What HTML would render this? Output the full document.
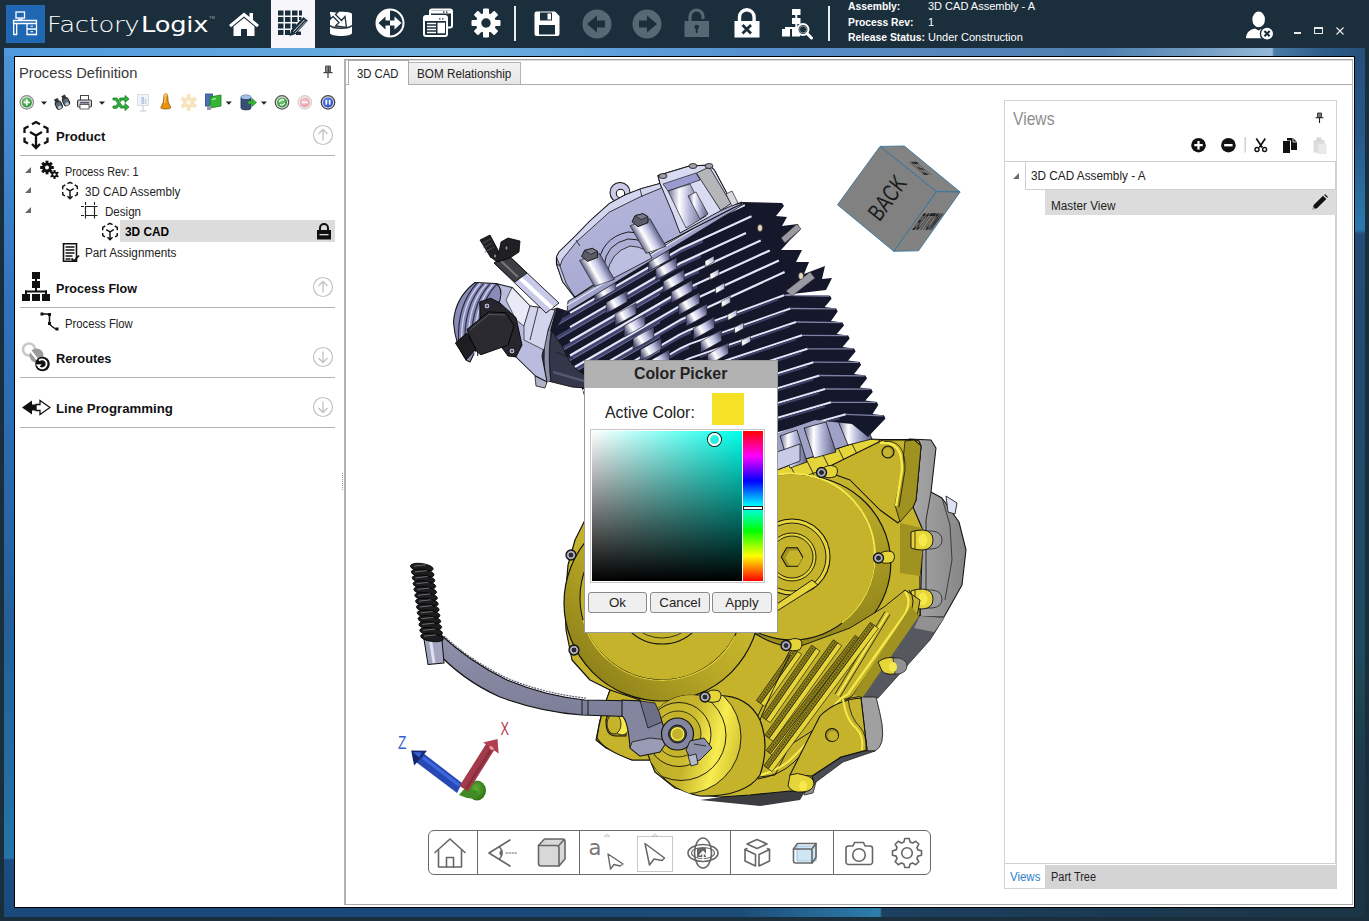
<!DOCTYPE html>
<html lang="en">
<head>
<meta charset="utf-8">
<title>FactoryLogix - Process Definition</title>
<style>
html,body{margin:0;padding:0;}
body{width:1369px;height:921px;position:relative;overflow:hidden;background:#1b2e3c;font-family:"Liberation Sans",sans-serif;font-size:12px;color:#222;}
.abs{position:absolute;}
.t{position:absolute;white-space:nowrap;line-height:1;transform-origin:0 0;}
#frame{left:4px;top:48px;width:1361px;height:869px;background:linear-gradient(90deg,#4f9ade 0px,#6eb0de 452px,#5fa2dc 596px,#5590cf 746px,#5788bd 908px,#4d7fb0 1096px,#6b97bd 1176px,#93b9d6 1268px,#4a7ba6 1270px,#2e5c8a 1320px,#24507a 1361px);}
#frameL{left:4px;top:56px;width:10px;height:861px;background:linear-gradient(180deg,#4c95d8 0px,#2f72bc 250px,#2a68ac 420px,#23609a 570px,#2474a8 800px,#2476aa 802px,#1b4d80 804px,#1a4a7c 861px);}
#frameB{left:4px;top:907px;width:1361px;height:10px;background:linear-gradient(90deg,#1a4a7c 0px,#1a4878 500px,#1c4c78 736px,#2c7aa8 866px,#2e7eac 876px,#1c4060 878px,#1b3a52 1100px,#1b3445 1361px);}
#frameR{left:1355px;top:56px;width:10px;height:861px;background:linear-gradient(180deg,#25507c 0px,#27588a 80px,#2b78ac 168px,#2b78ac 174px,#234c78 178px,#214a6c 400px,#1f4a5e 600px,#1e4452 640px,#1c3a4c 700px,#1b3445 861px);}
#win{left:14px;top:56px;width:1339px;height:850px;background:#fff;border:1px solid #000;}
.b{font-weight:bold;}
.tree{font-size:12px;color:#222;}
.hdr{font-size:14px;font-weight:bold;color:#111;}
.sep{position:absolute;height:1px;background:#b4b4b4;left:20px;width:315px;}
.cpb{background:#efefef;border:1px solid #8a8a8a;border-radius:3px;box-sizing:border-box;font-size:13.300px;text-align:center;line-height:19px;color:#222;}
</style>
</head>
<body>
<!-- window frame -->
<div id="frame" class="abs"></div>
<div id="frameL" class="abs"></div>
<div id="frameR" class="abs"></div>
<div id="frameB" class="abs"></div>
<div id="win" class="abs"></div>

<!-- TOPBAR -->
<div id="topbar" class="abs" style="left:0;top:0;width:1369px;height:48px;background:#1b2e3c;"></div>
<!--TOPBAR-CONTENT-->
<div class="abs" style="left:6px;top:5px;width:39px;height:38px;background:#1f66b3;box-shadow:inset 0 0 3px #2a6cb0;"></div>
<svg class="abs" style="left:6px;top:5px" width="39" height="38" viewBox="0 0 39 38" fill="none" stroke="#fff" stroke-width="1.3">
<rect x="10" y="7" width="8.5" height="6"/><path d="M13 13v2h3v-2"/>
<path d="M7.5 15.5h23v3h-23zM7.700 18.500v11h3v-11M21 18.500v11h9.500v-11M21 24h9.500"/>
<path d="M24.500 21.200h2.500M24.500 26.700h2.500" stroke-width="1"/>
</svg>
<div class="t" style="left:46.500px;top:13.500px;font-family:'DejaVu Sans Light','DejaVu Sans',sans-serif;font-weight:200;font-size:22px;color:#fff;letter-spacing:-0.3px;transform:scaleX(1.18);" id="fl1">Factory</div>
<div class="t" style="left:140.600px;top:13.500px;font-family:'DejaVu Sans',sans-serif;font-weight:400;font-size:22px;color:#fff;letter-spacing:-0.2px;transform:scaleX(1.17);" id="fl2">Logix</div>
<div class="t" style="left:209px;top:16px;font-size:4px;color:#9aa;">TM</div>
<!-- selected tab -->
<div class="abs" style="left:271px;top:0;width:44px;height:48px;background:#f7f7fb;"></div>
<!-- home -->
<svg class="abs" style="left:228px;top:10px" width="32" height="28" viewBox="0 0 32 28"><path d="M16 2.500L1 15l2 2.300L16 6.500l13 10.800 2-2.300L25 10V3h-3.500v4z" fill="#fff"/><path d="M5.500 16.500L16 8l10.500 8.500V26h-7.500v-7h-6v7h-7.500z" fill="#fff"/></svg>
<!-- grid pencil -->
<svg class="abs" style="left:277px;top:9px" width="32" height="28" viewBox="0 0 32 28"><g fill="#1b2e3c"><rect x="1" y="1.500" width="5.500" height="5"/><rect x="8" y="1.500" width="5.500" height="5"/><rect x="15" y="1.500" width="5.500" height="5"/><rect x="22" y="1.500" width="3" height="5"/><rect x="1" y="8" width="5.500" height="5"/><rect x="8" y="8" width="5.500" height="5"/><rect x="15" y="8" width="5.500" height="5"/><rect x="22" y="8" width="2.500" height="3"/><rect x="1" y="14.500" width="5.500" height="5"/><rect x="8" y="14.500" width="5.500" height="5"/><rect x="15" y="14.500" width="4" height="5"/><rect x="1" y="21" width="5.500" height="5"/><rect x="8" y="21" width="5" height="5"/><rect x="19" y="22.500" width="5" height="3.500"/></g><path d="M12.500 27l1.700-6L26.500 8l4.300 3.800L18.700 25z" fill="#1b2e3c"/><path d="M16.500 22.500L27.500 10.800" stroke="#f7f7fb" stroke-width="0.900"/><path d="M18 24L29 12.300" stroke="#f7f7fb" stroke-width="0.700"/></svg>
<!-- database -->
<svg class="abs" style="left:327px;top:8px" width="28" height="30" viewBox="0 0 28 30"><path d="M3 6c0-3 22-3 22 0v19c0 4-22 4-22 0z" fill="#fff"/><path d="M3 17.500c3 3.500 19 3.500 22 0" stroke="#1b2e3c" stroke-width="1.500" fill="none"/><path d="M2 3l9 1-2.500 2.500 6 6 3.500-4 1.500 11-11-1.500 3.500-3.500-6-6L3.500 11z" fill="#fff" stroke="#1b2e3c" stroke-width="1.300"/></svg>
<!-- circle arrows -->
<svg class="abs" style="left:374px;top:7px" width="32" height="32" viewBox="0 0 32 32"><circle cx="16" cy="16" r="13.500" fill="none" stroke="#fff" stroke-width="2"/><path d="M16 2.500A13.500 13.500 0 0 0 16 29.500z" fill="#fff"/><path d="M4.500 16l7-6.500v4h4.500v5h-4.500v4z" fill="#1b2e3c"/><path d="M27.500 16l-7-6.500v4H16v5h4.500v4z" fill="#fff"/></svg>
<!-- windows -->
<svg class="abs" style="left:422px;top:8px" width="32" height="30" viewBox="0 0 32 30"><rect x="8" y="1.500" width="22" height="18" rx="2" fill="#1b2e3c" stroke="#fff" stroke-width="2"/><rect x="2" y="8" width="23" height="20" rx="2" fill="#1b2e3c" stroke="#fff" stroke-width="2"/><path d="M2 9h23v4H2z" fill="#fff"/><path d="M5 15.500h9M5 18.500h9M5 21.500h9M5 24.500h9" stroke="#fff" stroke-width="1.600"/><rect x="15.500" y="14.700" width="7.500" height="10.600" fill="#fff"/><path d="M9 4h20" stroke="#fff" stroke-width="3"/><path d="M21 4.200h1.500M24 4.200h1.500" stroke="#1b2e3c" stroke-width="1.200"/><path d="M17 10.800h1.500M20 10.800h1.500" stroke="#1b2e3c" stroke-width="1.200"/></svg>
<!-- gear -->
<svg class="abs" style="left:471px;top:8px" width="30" height="30" viewBox="-15 -15 30 30"><g fill="#fff"><circle r="10"/><g id="gt"><rect x="-3" y="-14.500" width="6" height="7" rx="1"/></g><use href="#gt" transform="rotate(45)"/><use href="#gt" transform="rotate(90)"/><use href="#gt" transform="rotate(135)"/><use href="#gt" transform="rotate(180)"/><use href="#gt" transform="rotate(225)"/><use href="#gt" transform="rotate(270)"/><use href="#gt" transform="rotate(315)"/></g><circle r="4.700" fill="#1b2e3c"/></svg>
<div class="abs" style="left:514px;top:6px;width:2px;height:35px;background:#e8eaec;"></div>
<!-- save -->
<svg class="abs" style="left:534px;top:11px" width="26" height="26" viewBox="0 0 26 26"><path d="M2.500 0.500h18.500l4.500 4.500v18a2 2 0 0 1-2 2h-21a2 2 0 0 1-2-2v-20.500a2 2 0 0 1 2-2z" fill="#fff"/><rect x="5" y="14" width="16" height="9.500" fill="#1b2e3c"/><rect x="6" y="1.500" width="12" height="8" fill="#1b2e3c"/><rect x="13.500" y="2.500" width="3.500" height="6" fill="#fff"/></svg>
<!-- back/forward -->
<svg class="abs" style="left:582px;top:9px" width="30" height="30" viewBox="0 0 30 30"><circle cx="15" cy="15" r="14.500" fill="#566874"/><path d="M5 15l10-8.500v5h8v7h-8v5z" fill="#1b2e3c"/></svg>
<svg class="abs" style="left:632px;top:9px" width="30" height="30" viewBox="0 0 30 30"><circle cx="15" cy="15" r="14.500" fill="#566874"/><path d="M25 15l-10-8.500v5H7v7h8v5z" fill="#1b2e3c"/></svg>
<!-- unlock -->
<svg class="abs" style="left:684px;top:8px" width="26" height="30" viewBox="0 0 26 30"><path d="M6 13V8.500a6.500 6.500 0 0 1 13 0V11" fill="none" stroke="#566874" stroke-width="3.200"/><rect x="0.500" y="13" width="24.500" height="16" fill="#566874"/><circle cx="12.700" cy="19" r="2.300" fill="#1b2e3c"/><rect x="11.800" y="19" width="1.800" height="6" fill="#1b2e3c"/></svg>
<!-- lock x -->
<svg class="abs" style="left:734px;top:8px" width="26" height="30" viewBox="0 0 26 30"><path d="M5.500 14V9a7.300 7.300 0 0 1 14.600 0v5" fill="none" stroke="#fff" stroke-width="3.400"/><rect x="0.500" y="13" width="25" height="16.500" fill="#fff"/><path d="M8.500 17l8.500 8.500M17 17l-8.500 8.500" stroke="#1b2e3c" stroke-width="2.800"/></svg>
<!-- hierarchy search -->
<svg class="abs" style="left:781px;top:8px" width="32" height="32" viewBox="0 0 32 32"><g fill="#fff"><rect x="11" y="1" width="8.500" height="6"/><rect x="11" y="10" width="8.500" height="6"/><rect x="14.300" y="6" width="2" height="14"/><rect x="4" y="19" width="17" height="2"/><rect x="1" y="21" width="8" height="7.500"/><rect x="11" y="21" width="8" height="7.500"/><rect x="4" y="19" width="2" height="4"/></g><circle cx="22" cy="21.500" r="5.500" fill="#1b2e3c" stroke="#fff" stroke-width="2"/><circle cx="22" cy="21.500" r="3.600" fill="none" stroke="#8a97a0" stroke-width="1"/><path d="M26 25.500l4.500 4.500" stroke="#fff" stroke-width="3" stroke-linecap="round"/></svg>
<div class="abs" style="left:828px;top:6px;width:2px;height:35px;background:#e8eaec;"></div>
<!-- info -->
<div class="t b" style="left:848px;top:1px;font-size:11px;color:#fff;transform:scaleX(0.94);" id="i1">Assembly:</div>
<div class="t" style="left:928px;top:1px;font-size:11px;color:#fff;" id="i2">3D CAD Assembly - A</div>
<div class="t b" style="left:848px;top:16.500px;font-size:11px;color:#fff;transform:scaleX(0.94);" id="i3">Process Rev:</div>
<div class="t" style="left:928px;top:16.500px;font-size:11px;color:#fff;" id="i4">1</div>
<div class="t b" style="left:848px;top:31.500px;font-size:11px;color:#fff;transform:scaleX(0.94);" id="i5">Release Status:</div>
<div class="t" style="left:928px;top:31.500px;font-size:11px;color:#fff;" id="i6">Under Construction</div>
<!-- user icon -->
<svg class="abs" style="left:1244.500px;top:9.500px" width="31.500" height="31.500" viewBox="0 0 30 30"><ellipse cx="13" cy="9" rx="6" ry="7.500" fill="#fff"/><path d="M1 27c0-6 4-8.500 8.500-9.500l3.500 2 3.500-2c2 .4 4 1.200 5.500 2.500v7z" fill="#fff"/><circle cx="21" cy="22.500" r="6.300" fill="#fff" stroke="#1b2e3c" stroke-width="1.300"/><path d="M18.500 20l5 5M23.500 20l-5 5" stroke="#1b2e3c" stroke-width="2"/></svg>
<div class="abs" style="left:1294px;top:32px;width:7px;height:2px;background:#e8e8e8;"></div>
<div class="abs" style="left:1314px;top:27px;width:7px;height:4px;border:1px solid #e8e8e8;border-top-width:2px;"></div>
<svg class="abs" style="left:1335px;top:25.500px" width="10" height="10" viewBox="0 0 10 10"><path d="M1.500 1.500l7 7M8.500 1.500l-7 7" stroke="#e8e8e8" stroke-width="1.200"/></svg>
<!--/TOPBAR-CONTENT-->

<!--LEFT-PANEL-->
<div class="t" style="left:19px;top:65px;font-size:15.500px;color:#3a3a3a;transform:scaleX(0.948);" id="pd">Process Definition</div>
<svg class="abs" style="left:322px;top:65px" width="12" height="14" viewBox="0 0 12 14"><path d="M3.500 1h5v6.500h-5z" fill="#888" stroke="#555" stroke-width="1"/><path d="M6.500 1.500v6" stroke="#444" stroke-width="1.500"/><path d="M1.500 7.700h9M6 8v5" stroke="#444" stroke-width="1.200"/></svg>
<!-- small toolbar -->
<svg class="abs" style="left:14px;top:92px" width="330" height="22" viewBox="0 0 330 22">
<defs>
<radialGradient id="gG" cx="0.4" cy="0.35" r="0.7"><stop offset="0" stop-color="#7fd27f"/><stop offset="1" stop-color="#1f8a2c"/></radialGradient>
<radialGradient id="gR" cx="0.4" cy="0.35" r="0.7"><stop offset="0" stop-color="#f7c4c8"/><stop offset="1" stop-color="#ee9aa3"/></radialGradient>
<radialGradient id="gB" cx="0.4" cy="0.35" r="0.7"><stop offset="0" stop-color="#6b8ff0"/><stop offset="1" stop-color="#2447c8"/></radialGradient>
</defs>
<g>
<circle cx="12.800" cy="10.400" r="6.700" fill="#e8e8e8" stroke="#8a8a8a" stroke-width="1.200"/><circle cx="12.800" cy="10.400" r="5" fill="url(#gG)"/><path d="M12.800 7.300v6.200M9.700 10.400h6.200" stroke="#fff" stroke-width="1.800"/>
<path d="M27 9.500h6l-3 3.200z" fill="#222"/>
<!-- binoculars -->
<g transform="translate(48 10.500) rotate(-25)"><rect x="-7" y="-3" width="6" height="8" rx="2.500" fill="#5a6a78" stroke="#222" stroke-width="1"/><rect x="1" y="-3" width="6" height="8" rx="2.500" fill="#5a6a78" stroke="#222" stroke-width="1"/><rect x="-6" y="-6" width="4" height="4" fill="#333"/><rect x="2" y="-6" width="4" height="4" fill="#333"/><ellipse cx="-4" cy="3.500" rx="2" ry="1.500" fill="#bcd"/><ellipse cx="4" cy="3.500" rx="2" ry="1.500" fill="#bcd"/></g>
<!-- printer -->
<rect x="66.500" y="3.500" width="8" height="5" fill="#fff" stroke="#444" stroke-width="1"/><rect x="63.500" y="8" width="14" height="7" rx="1" fill="#c9ccd2" stroke="#333" stroke-width="1"/><rect x="66" y="12.500" width="9" height="4.500" fill="#fff" stroke="#444" stroke-width="0.800"/><rect x="66" y="10" width="9" height="1.500" fill="#556"/>
<path d="M85 9.500h6l-3 3.200z" fill="#222"/>
<!-- green shuffle -->
<path d="M99 6h4l5 8h3v-2.500l4 3.500-4 3.500V16h-4.500l-5-8H99zM99 14h3l1.200-1.800 1.300 2-1.500 2H99zM106 6h5V3.500l4 3.500-4 3.500V8h-3.500l-1 1.600-1.300-2z" fill="#2fb43a" stroke="#137a1c" stroke-width="0.800"/>
<!-- presentation (faded) -->
<g opacity="0.45"><rect x="123.500" y="2.500" width="11" height="11" fill="#dfe8f4" stroke="#9ab" stroke-width="0.800"/><rect x="127.500" y="5" width="2.500" height="7" fill="#6a8ac0"/><rect x="130.500" y="7" width="2" height="5" fill="#9ab"/><path d="M129 13.500v5M126 19h6" stroke="#889" stroke-width="1"/></g>
<!-- pawn/bell -->
<path d="M150 3.500a1.800 1.800 0 0 1 3.600 0l.6 6.500 2.600 5.500c0 2-10 2-10 0l2.600-5.500z" fill="#e8940f" stroke="#8a4a00" stroke-width="0.700"/><path d="M151.200 4l-.4 7" stroke="#ffd37a" stroke-width="1.200"/><circle cx="151.800" cy="3" r="1.600" fill="#f6c26a"/>
<!-- faded gear -->
<g transform="translate(174.700 10.500)" opacity="0.8"><circle r="5.500" fill="#f7ddb0"/><g fill="#f7ddb0"><rect x="-2" y="-8.500" width="4" height="17" rx="1"/><rect x="-2" y="-8.500" width="4" height="17" rx="1" transform="rotate(60)"/><rect x="-2" y="-8.500" width="4" height="17" rx="1" transform="rotate(120)"/></g><circle r="2.300" fill="#fff6e4"/></g>
<!-- monitor green -->
<rect x="191.500" y="2" width="7" height="12" fill="#4a6fb5" stroke="#2b4a86" stroke-width="0.800"/><path d="M194 15l2-3 3 2z" fill="#777"/><path d="M196 5l11-2v11l-11 2z" fill="#35b535" stroke="#1c7a22" stroke-width="0.800"/><path d="M198 7.500l4-1" stroke="#c8f5c8" stroke-width="1.200"/><rect x="193" y="14" width="4" height="4" fill="#99a"/>
<path d="M211.800 9.500h6l-3 3.200z" fill="#222"/>
<!-- db arrow -->
<path d="M227 5c0-2.500 10-2.500 10 0v11c0 2.500-10 2.500-10 0z" fill="#3a4f78" stroke="#1f2d4a" stroke-width="0.800"/><ellipse cx="232" cy="5" rx="5" ry="2" fill="#9fc0e8"/><path d="M234 9h4V6.500l4.500 4-4.500 4V12h-4z" fill="#35b535" stroke="#1c7a22" stroke-width="0.600"/>
<path d="M246.900 9.500h6l-3 3.200z" fill="#222"/>
<!-- green refresh circle -->
<circle cx="268" cy="10.400" r="6.700" fill="#e4e4e4" stroke="#555" stroke-width="1.300"/><circle cx="268" cy="10.400" r="5" fill="url(#gG)"/><path d="M265.500 10a2.600 2.600 0 0 1 4.500-1.500M270.500 10.800a2.600 2.600 0 0 1-4.500 1.500" stroke="#fff" stroke-width="1.300" fill="none"/>
<!-- red minus faded -->
<circle cx="290.800" cy="10.400" r="6.700" fill="#f0f0f0" stroke="#d0d0d0" stroke-width="1.200"/><circle cx="290.800" cy="10.400" r="5" fill="url(#gR)"/><path d="M287.800 10.400h6" stroke="#fff" stroke-width="1.800"/>
<!-- blue pause -->
<circle cx="314" cy="10.400" r="6.700" fill="#d8d8e0" stroke="#444" stroke-width="1.300"/><circle cx="314" cy="10.400" r="5" fill="url(#gB)"/><path d="M312.300 8v4.800M315.700 8v4.800" stroke="#fff" stroke-width="1.500"/>
</g></svg>
<!-- symbols -->
<svg width="0" height="0" style="position:absolute"><defs>
<symbol id="cube" viewBox="0 0 28 30"><g fill="none" stroke="#111" stroke-width="2.300" stroke-linejoin="miter"><path d="M10 4.300L14 2l4 2.300M21.500 6.300l4 2.200v4.500M6.500 6.300l-4 2.200v4.500M25.500 17.500v4l-3.500 2M2.500 17.500v4l3.500 2M14 15.500V27.500M14 15.500L8 12M14 15.500L20 12M10 24l4 4 4-4"/></g></symbol>
<symbol id="circUp" viewBox="0 0 22 22"><circle cx="11" cy="11" r="9.500" fill="#fff" stroke="#c2c2c2" stroke-width="1.200"/><path d="M11 16.500v-11M6.500 10L11 5.500l4.500 4.500" stroke="#c2c2c2" stroke-width="1.300" fill="none"/></symbol>
<symbol id="circDn" viewBox="0 0 22 22"><circle cx="11" cy="11" r="9.500" fill="#fff" stroke="#c2c2c2" stroke-width="1.200"/><path d="M11 5.500v11M6.500 12L11 16.500l4.500-4.500" stroke="#c2c2c2" stroke-width="1.300" fill="none"/></symbol>
<symbol id="exp" viewBox="0 0 6 6"><path d="M6 0V6H0z" fill="#6a6a6a"/></symbol>
</defs></svg>
<svg class="abs" style="left:21.500px;top:120px" width="28" height="30"><use href="#cube"/></svg>
<div class="t hdr" style="left:56px;top:129.500px;font-size:13.500px;transform:scaleX(0.967);" id="h1">Product</div>
<svg class="abs" style="left:312px;top:124px" width="22" height="22"><use href="#circUp"/></svg>
<div class="sep" style="top:155px;"></div>
<!-- tree -->
<svg class="abs" style="left:24.500px;top:167px" width="6" height="6"><use href="#exp"/></svg>
<svg class="abs" style="left:24.500px;top:187px" width="6" height="6"><use href="#exp"/></svg>
<svg class="abs" style="left:24.500px;top:207px" width="6" height="6"><use href="#exp"/></svg>
<svg class="abs" style="left:40px;top:160px" width="20" height="20" viewBox="0 0 20 20"><g transform="translate(7 7.500)" fill="#111"><circle r="4.800"/><g id="g6"><rect x="-1.500" y="-6.800" width="3" height="13.600"/></g><use href="#g6" transform="rotate(45)"/><use href="#g6" transform="rotate(90)"/><use href="#g6" transform="rotate(135)"/><circle r="2" fill="#fff"/></g><g transform="translate(14.500 14.500)" fill="#111"><circle r="3"/><rect x="-1" y="-4.500" width="2" height="9"/><rect x="-1" y="-4.500" width="2" height="9" transform="rotate(60)"/><rect x="-1" y="-4.500" width="2" height="9" transform="rotate(120)"/><circle r="1.200" fill="#fff"/></g></svg>
<div class="t tree" style="left:65px;top:165.500px;transform:scaleX(0.904);" id="t1">Process Rev: 1</div>
<svg class="abs" style="left:61px;top:180.500px" width="18" height="19"><use href="#cube"/></svg>
<div class="t tree" style="left:85px;top:186px;transform:scaleX(0.966);" id="t2">3D CAD Assembly</div>
<svg class="abs" style="left:80px;top:200.500px" width="20" height="20" viewBox="0 0 20 20"><g stroke="#222" stroke-width="1.100" fill="none"><path d="M5.500 1v18M14.500 1v18M1 5.500h18M1 14.500h18" stroke-dasharray="3 1.500"/><path d="M5.500 5.500h9v9h-9z"/></g></svg>
<div class="t tree" style="left:105px;top:206px;transform:scaleX(0.965);" id="t3">Design</div>
<div class="abs" style="left:120px;top:220px;width:215px;height:22px;background:#dcdcdc;"></div>
<svg class="abs" style="left:101px;top:221.500px" width="18" height="19"><use href="#cube"/></svg>
<div class="t tree b" style="left:124.500px;top:225.500px;font-size:12.500px;color:#000;transform:scaleX(0.946);" id="t4">3D CAD</div>
<svg class="abs" style="left:316px;top:222px" width="16" height="18" viewBox="0 0 16 18"><path d="M4 8.500V6a4 4 0 0 1 8 0v2.500" fill="none" stroke="#111" stroke-width="2"/><rect x="1" y="8" width="14" height="9.500" fill="#111"/><rect x="3.500" y="12" width="9" height="1.300" fill="#dcdcdc"/></svg>
<svg class="abs" style="left:62px;top:243px" width="18" height="20" viewBox="0 0 18 20"><path d="M1.500 0.800h13v17.500h-13z" fill="#fff" stroke="#111" stroke-width="1.600"/><path d="M3.500 4h9M3.500 7h9M3.500 10h9M3.500 13h7" stroke="#111" stroke-width="1.500"/><path d="M3.500 16h5" stroke="#111" stroke-width="1.500"/><path d="M9.500 15.500l2.500 2.500 5-5.500" stroke="#111" stroke-width="1.800" fill="none"/></svg>
<div class="t tree" style="left:85px;top:247px;transform:scaleX(0.979);" id="t5">Part Assignments</div>
<!-- Process Flow header -->
<svg class="abs" style="left:22px;top:272px" width="28" height="30" viewBox="0 0 28 30"><g fill="#111"><rect x="10" y="0" width="8" height="7"/><rect x="10" y="9" width="8" height="7"/><rect x="13" y="6" width="2" height="14"/><rect x="3" y="18.500" width="22" height="2"/><rect x="3" y="18.500" width="2" height="4"/><rect x="23" y="18.500" width="2" height="4"/><rect x="0" y="22" width="8" height="7"/><rect x="10" y="22" width="8" height="7"/><rect x="20" y="22" width="8" height="7"/></g></svg>
<div class="t hdr" style="left:56px;top:281.500px;font-size:13.500px;transform:scaleX(0.931);" id="h2">Process Flow</div>
<svg class="abs" style="left:312px;top:276px" width="22" height="22"><use href="#circUp"/></svg>
<div class="sep" style="top:307px;"></div>
<svg class="abs" style="left:40px;top:312px" width="20" height="20" viewBox="0 0 20 20"><path d="M2 2h5c2 0 2.500 1 2.500 2.500v6c0 2 1 3 2.500 4l4.500 3" fill="none" stroke="#111" stroke-width="1.500"/><g fill="#111"><rect x="0.500" y="0.500" width="3" height="3"/><rect x="8" y="1" width="3" height="3"/><rect x="8" y="10" width="3" height="3"/><rect x="15.500" y="15.500" width="3" height="3"/></g></svg>
<div class="t tree" style="left:65px;top:317.500px;transform:scaleX(0.94);" id="t6">Process Flow</div>
<!-- Reroutes -->
<svg class="abs" style="left:21px;top:342px" width="30" height="30" viewBox="0 0 30 30"><circle cx="8" cy="7.500" r="6" fill="none" stroke="#c8c8c8" stroke-width="2.500"/><circle cx="15.500" cy="13.500" r="7" fill="#9a9a9a"/><path d="M8 7l11 14" stroke="#fff" stroke-width="2.200"/><circle cx="21.500" cy="22" r="7.300" fill="#111"/><path d="M18 18.500a4.500 4.500 0 1 1-.5 6" stroke="#fff" stroke-width="1.800" fill="none"/><path d="M14.800 22.500l3 3.500 2.800-3.700z" fill="#fff"/></svg>
<div class="t hdr" style="left:56px;top:351.500px;font-size:13.500px;transform:scaleX(0.947);" id="h3">Reroutes</div>
<svg class="abs" style="left:312px;top:346px" width="22" height="22"><use href="#circDn"/></svg>
<div class="sep" style="top:377px;"></div>
<!-- Line Programming -->
<svg class="abs" style="left:21px;top:399px" width="30" height="17" viewBox="0 0 30 17"><path d="M1 8.500L11 1.500V5.500H15V11.500H11V15.500z" fill="#111"/><path d="M29 8.500L19 1.500V5.500H15V11.500H19V15.500z" fill="#fff" stroke="#111" stroke-width="1.300"/></svg>
<div class="t hdr" style="left:56px;top:401.500px;font-size:13.500px;transform:scaleX(0.98);" id="h4">Line Programming</div>
<svg class="abs" style="left:312px;top:396px" width="22" height="22"><use href="#circDn"/></svg>
<div class="sep" style="top:427px;"></div>
<!-- splitter dots -->
<div class="abs" style="left:342px;top:473px;width:1px;height:17px;background:repeating-linear-gradient(180deg,#999 0 1px,#fff 1px 2px);"></div>
<!--/LEFT-PANEL-->

<!--MAIN-PANEL-->
<!-- main tab control -->
<div class="abs" style="left:344px;top:59px;width:1009px;height:846px;border-left:2px solid #b2b2b2;border-top:1px solid #a6a6a6;border-right:1px solid #b8b8b8;border-bottom:1px solid #a6a6a6;box-sizing:border-box;"></div>
<div class="abs" style="left:346px;top:60px;width:1006px;height:1px;background:#dcdcdc;"></div>
<div class="abs" style="left:349px;top:84px;width:1003px;height:1px;background:#ababab;"></div>
<div class="abs" style="left:346px;top:61px;width:2px;height:24px;border-right:1px solid #b0b0b0;border-bottom:1px solid #b0b0b0;box-sizing:content-box;height:23px;"></div>
<div class="abs" style="left:408px;top:62px;width:113px;height:22px;background:linear-gradient(180deg,#f2f2f2,#e6e6e6);border:1px solid #b4b4b4;border-bottom:none;box-sizing:border-box;"></div>
<div class="abs" style="left:348px;top:60px;width:61px;height:25px;background:#fff;border:1px solid #ababab;border-bottom:none;box-sizing:border-box;"></div>
<div class="t" style="left:357px;top:67.500px;font-size:12px;color:#222;transform:scaleX(0.941);" id="tab1">3D CAD</div>
<div class="t" style="left:417px;top:67.500px;font-size:12px;color:#222;transform:scaleX(0.976);" id="tab2">BOM Relationship</div>
<!--/MAIN-PANEL-->

<!--ENGINE-->
<svg class="abs" style="left:400px;top:160px" width="580" height="660" viewBox="400 160 580 660" stroke-linejoin="round">
<defs>
<linearGradient id="cylG" x1="0" y1="0" x2="1" y2="0"><stop offset="0" stop-color="#6d6f98"/><stop offset="0.3" stop-color="#ffffff"/><stop offset="0.55" stop-color="#b9bbdc"/><stop offset="1" stop-color="#5d5f86"/></linearGradient>
<linearGradient id="colG" gradientUnits="userSpaceOnUse" x1="0" y1="0" x2="22" y2="-12"><stop offset="0" stop-color="#4e5078"/><stop offset="0.35" stop-color="#ffffff"/><stop offset="0.6" stop-color="#c4c6e4"/><stop offset="1" stop-color="#55577e"/></linearGradient>
<linearGradient id="magG" x1="0" y1="1" x2="1" y2="0"><stop offset="0" stop-color="#7d7114"/><stop offset="0.45" stop-color="#b8a826"/><stop offset="1" stop-color="#e0cf36"/></linearGradient>
<linearGradient id="cluG" x1="0" y1="0" x2="1" y2="1"><stop offset="0" stop-color="#d8c833"/><stop offset="0.6" stop-color="#a89a22"/><stop offset="1" stop-color="#857a18"/></linearGradient>
<linearGradient id="bossG" x1="0" y1="0" x2="1" y2="1"><stop offset="0" stop-color="#c4b32b"/><stop offset="0.5" stop-color="#f3e646"/><stop offset="1" stop-color="#c0b02a"/></linearGradient>
<linearGradient id="bossH" gradientUnits="userSpaceOnUse" x1="640" y1="720" x2="768" y2="750"><stop offset="0" stop-color="#b8a827"/><stop offset="0.4" stop-color="#c6b52c"/><stop offset="0.62" stop-color="#f7ec50"/><stop offset="0.78" stop-color="#d8c834"/><stop offset="1" stop-color="#a89a22"/></linearGradient>
<linearGradient id="bossH2" gradientUnits="userSpaceOnUse" x1="640" y1="720" x2="768" y2="750"><stop offset="0" stop-color="#c4b32b"/><stop offset="0.4" stop-color="#cdbc2f"/><stop offset="0.56" stop-color="#f7ec50"/><stop offset="0.7" stop-color="#d8c834"/><stop offset="1" stop-color="#b8a827"/></linearGradient>
<linearGradient id="armG" x1="0" y1="0" x2="0" y2="1"><stop offset="0" stop-color="#8f91ab"/><stop offset="1" stop-color="#7c7e97"/></linearGradient>
<linearGradient id="vcG" x1="0" y1="0" x2="0.4" y2="1"><stop offset="0" stop-color="#cfd1ee"/><stop offset="0.35" stop-color="#b2b4da"/><stop offset="1" stop-color="#a6a8d0"/></linearGradient>
<linearGradient id="grayG" x1="0" y1="0" x2="1" y2="0"><stop offset="0" stop-color="#a8a8a8"/><stop offset="1" stop-color="#858585"/></linearGradient>
<clipPath id="finClip"><polygon points=""/></clipPath>
</defs>
<polygon points="909.0,439.0 931.0,440.0 936.0,448.0 931.0,492.0 942.0,498.0 959.0,522.0 966.0,550.0 962.0,585.0 944.0,617.0 920.0,617.0 922.0,555.0 913.0,507.0 909.0,470.0" fill="url(#grayG)" stroke="#111" stroke-width="1.04" />
<polyline points="931.0,492.0 926.0,520.0 926.0,600.0" fill="none" stroke="#222" stroke-width="0.91" />
<polyline points="942.0,498.0 950.0,525.0 952.0,560.0 945.0,600.0" fill="none" stroke="#333" stroke-width="0.91" />
<polygon points="946.0,496.0 957.0,503.0 955.0,514.0 948.0,512.0" fill="#dfe1f5" stroke="#222" stroke-width="0.91" />
<polygon points="918.0,616.0 944.0,618.0 930.0,640.0 878.0,698.0 862.0,697.0" fill="#56585f" stroke="#222" stroke-width="0.78" />
<polygon points="920.0,616.0 944.0,618.0 934.0,632.0 914.0,628.0" fill="#919191" stroke="none" stroke-width="0" />
<path d="M860,697 L876,697 Q880,712 882,724 Q885,746 875,751 L864,751 Z" fill="#a0a0a0" stroke="#222" stroke-width="0.91" />
<polygon points="864.0,751.0 875.0,751.0 843.0,762.0 816.0,782.0 806.0,780.0 838.0,758.0" fill="#4b4d55" stroke="#222" stroke-width="0.78" />
<polygon points="806.0,787.0 816.0,782.0 813.0,793.0 804.0,795.0" fill="#919191" stroke="#222" stroke-width="0.78" />
<polygon points="750.0,793.0 806.0,790.0 800.0,800.0 760.0,806.0 700.0,800.0" fill="#3c3d40" stroke="none" stroke-width="0" />
<polygon points="777.0,470.0 800.0,461.0 821.0,454.0 845.0,446.0 867.0,439.0 883.0,439.5 914.0,439.5 919.0,441.0 921.0,446.0 916.0,500.0 913.0,507.0 922.0,528.0 922.0,555.0 920.0,576.0 920.0,615.0 917.0,617.0 862.0,696.0 861.0,698.0 865.0,733.0 867.0,750.0 841.0,757.0 812.0,776.0 814.0,784.0 805.0,792.0 790.0,791.0 770.0,793.0 750.0,795.0 720.0,797.0 700.0,795.0 675.0,788.0 655.0,772.0 650.0,760.0 632.0,760.0 606.0,748.0 596.0,740.0 600.0,720.0 610.0,690.0 590.0,680.0 572.0,660.0 566.0,630.0 565.0,600.0 568.0,565.0 575.0,540.0 585.0,520.0 585.0,470.0" fill="#c4b32b" stroke="#111" stroke-width="1.17" />
<polygon points="777.0,470.0 800.0,461.0 821.0,454.0 845.0,446.0 867.0,439.0 880.0,440.0 872.0,452.0 850.0,458.0 822.0,470.0 800.0,478.0 777.0,486.0" fill="#e6d539" stroke="#111" stroke-width="0.78" />
<polyline points="790.0,465.0 798.0,481.0" fill="none" stroke="#222" stroke-width="0.91" />
<polyline points="806.0,459.0 814.0,475.0" fill="none" stroke="#222" stroke-width="0.91" />
<polyline points="822.0,453.0 830.0,469.0" fill="none" stroke="#222" stroke-width="0.91" />
<polyline points="838.0,448.0 846.0,464.0" fill="none" stroke="#222" stroke-width="0.91" />
<polyline points="852.0,444.0 860.0,460.0" fill="none" stroke="#222" stroke-width="0.91" />
<polygon points="822.0,470.0 883.0,440.0 914.0,440.0 921.0,446.0 916.0,500.0 898.0,523.0 880.0,510.0 850.0,480.0" fill="#c4b32b" stroke="#111" stroke-width="1.04" />
<polygon points="905.0,441.0 914.0,440.0 921.0,446.0 916.0,500.0 913.0,507.0 900.0,522.0 895.0,505.0 902.0,470.0" fill="#a09220" stroke="#111" stroke-width="0.78" />
<path d="M880,443 Q903,440 902,470 L896,506" fill="none" stroke="#f5e94c" stroke-width="2.4" />
<path d="M884,441.500 Q906,439 905,470 L899,507" fill="none" stroke="#111" stroke-width="0.78" />
<circle cx="888.0" cy="452.0" r="6.0" fill="#a09220" stroke="#111" stroke-width="1.04" />
<circle cx="887.5" cy="452.5" r="4.5" fill="#c4b32b" stroke="none" stroke-width="0" />
<polygon points="900.0,523.0 922.0,528.0 922.0,555.0 920.0,576.0 900.0,573.0" fill="#a09220" stroke="none" stroke-width="0" />
<path d="M922,531 h10 q10,1 10,9 q0,8 -10,9 h-10 z" fill="#9c9c9c" stroke="#222" stroke-width="0.78" />
<path d="M911,532 q4,-2 12,-2 q10,1 10,10 q0,9 -10,10 q-8,0 -12,-2 z" fill="#e6d539" stroke="#111" stroke-width="0.91" />
<ellipse cx="923.0" cy="540.0" rx="4.5" ry="6.5" fill="#f5e94c" stroke="none" stroke-width="0" transform="rotate(0 923.0 540.0)" />
<polyline points="915.0,531.0 915.0,549.0" fill="none" stroke="#111" stroke-width="0.78" />
<path d="M922,590 h10 q10,1 10,9 q0,8 -10,9 h-10 z" fill="#9c9c9c" stroke="#222" stroke-width="0.78" />
<path d="M911,591 q4,-2 12,-2 q10,1 10,10 q0,9 -10,10 q-8,0 -12,-2 z" fill="#e6d539" stroke="#111" stroke-width="0.91" />
<ellipse cx="923.0" cy="599.0" rx="4.5" ry="6.5" fill="#f5e94c" stroke="none" stroke-width="0" transform="rotate(0 923.0 599.0)" />
<polyline points="915.0,590.0 915.0,608.0" fill="none" stroke="#111" stroke-width="0.78" />
<ellipse cx="803.0" cy="562.0" rx="88.0" ry="86.0" fill="url(#cluG)" stroke="#111" stroke-width="1.17" transform="rotate(20 803.0 562.0)" />
<circle cx="792.0" cy="557.0" r="83.0" fill="#c4b32b" stroke="#111" stroke-width="1.17" />
<path d="M 722,512 A 83 83 0 0 1 875 557" fill="none" stroke="#f5e94c" stroke-width="2" />
<path d="M 875,557 A 83 83 0 0 1 842 623" fill="none" stroke="#e6d539" stroke-width="1.5" />
<circle cx="792.0" cy="557.0" r="38.0" fill="#e6d539" stroke="#111" stroke-width="1.04" />
<circle cx="792.0" cy="557.0" r="34.0" fill="#c4b32b" stroke="#111" stroke-width="0.91" />
<circle cx="792.0" cy="557.0" r="24.0" fill="#e6d539" stroke="#111" stroke-width="0.91" />
<circle cx="792.0" cy="557.0" r="21.0" fill="#c4b32b" stroke="#111" stroke-width="0.91" />
<polygon points="802.7,557.0 797.4,566.3 786.6,566.3 781.3,557.0 786.6,547.7 797.4,547.7" fill="#a09220" stroke="#111" stroke-width="1.04" />
<polygon points="802.5,558.0 798.2,565.4 789.8,565.4 785.5,558.0 789.8,550.6 798.2,550.6" fill="#c4b32b" stroke="none" stroke-width="0" />
<polygon points="818.0,585.0 777.0,611.0 777.0,604.0 812.0,580.0" fill="#e6d539" stroke="#111" stroke-width="0.91" />
<polygon points="752.0,778.0 756.0,720.0 770.0,690.0 790.0,650.0 850.0,628.0 884.0,607.0 905.0,590.0 920.0,600.0 917.0,617.0 862.0,696.0 840.0,700.0 826.0,722.0 790.0,745.0 775.0,775.0" fill="#c4b32b" stroke="#111" stroke-width="0.91" />
<path d="M905,592 Q912,600 905,614 L848,694 Q836,700 828,716 Q815,736 790,760 Q776,772 756,776" fill="none" stroke="#f5e94c" stroke-width="2.2" />
<path d="M909,590 Q917,600 909,616 L852,696 Q840,702 832,718 Q819,739 793,763 Q780,775 758,779" fill="none" stroke="#111" stroke-width="0.91" />
<polygon points="911.0,606.0 919.0,616.0 863.0,697.0 853.0,695.0" fill="#a09220" stroke="none" stroke-width="0" />
<polyline points="837.7,695.5 887.6,613.0" fill="none" stroke="#f5e94c" stroke-width="2" />
<polyline points="840.0,697.0 890.0,614.5" fill="none" stroke="#111" stroke-width="0.78" />
<polyline points="835.0,694.0 885.0,611.5" fill="none" stroke="#111" stroke-width="0.78" />
<polygon points="760.6,703.5 797.5,651.5 801.6,654.4 764.7,706.4" fill="#e6d539" stroke="#111" stroke-width="0.65" />
<polygon points="756.4,700.5 793.3,648.5 797.5,651.5 760.6,703.5" fill="#8c7f1a" stroke="#111" stroke-width="0.65" />
<polyline points="758.5,702.0 795.4,650.0" fill="none" stroke="#4a4210" stroke-width="1.8" stroke-dasharray="1.2 1.6"/>
<polygon points="766.1,719.8 815.9,648.2 820.0,651.0 770.2,722.6" fill="#e6d539" stroke="#111" stroke-width="0.65" />
<polygon points="761.9,716.8 811.7,645.2 815.9,648.2 766.1,719.8" fill="#8c7f1a" stroke="#111" stroke-width="0.65" />
<polyline points="764.0,718.3 813.8,646.7" fill="none" stroke="#4a4210" stroke-width="1.8" stroke-dasharray="1.2 1.6"/>
<polygon points="769.1,738.3 837.6,642.8 841.7,645.7 773.2,741.2" fill="#e6d539" stroke="#111" stroke-width="0.65" />
<polygon points="764.9,735.3 833.4,639.8 837.6,642.8 769.1,738.3" fill="#8c7f1a" stroke="#111" stroke-width="0.65" />
<polyline points="767.0,736.8 835.5,641.3" fill="none" stroke="#4a4210" stroke-width="1.8" stroke-dasharray="1.2 1.6"/>
<polygon points="770.3,753.6 859.3,638.6 863.2,641.7 774.2,756.7" fill="#e6d539" stroke="#111" stroke-width="0.65" />
<polygon points="766.1,750.4 855.1,635.4 859.3,638.6 770.3,753.6" fill="#8c7f1a" stroke="#111" stroke-width="0.65" />
<polyline points="768.2,752.0 857.2,637.0" fill="none" stroke="#4a4210" stroke-width="1.8" stroke-dasharray="1.2 1.6"/>
<polygon points="768.1,768.7 874.5,625.4 878.5,628.4 772.1,771.7" fill="#e6d539" stroke="#111" stroke-width="0.65" />
<polygon points="763.9,765.7 870.3,622.4 874.5,625.4 768.1,768.7" fill="#8c7f1a" stroke="#111" stroke-width="0.65" />
<polyline points="766.0,767.2 872.4,623.9" fill="none" stroke="#4a4210" stroke-width="1.8" stroke-dasharray="1.2 1.6"/>
<path d="M820,716 Q836,700 861,698 L865,733 L867,750 L841,757 L812,776 L790,775 Q805,745 820,716 Z" fill="#c4b32b" stroke="#111" stroke-width="1.04" />
<path d="M843,699 Q846,720 856,728 Q864,736 862,750" fill="none" stroke="#f5e94c" stroke-width="2" />
<path d="M848,698 Q850,718 860,727 Q867,735 866,750" fill="none" stroke="#111" stroke-width="0.78" />
<circle cx="832.0" cy="735.0" r="6.5" fill="#a09220" stroke="#111" stroke-width="1.04" />
<circle cx="833.0" cy="736.0" r="5.0" fill="#c4b32b" stroke="none" stroke-width="0" />
<path d="M790,775 q8,-3 14,0 q10,2 10,9 q-2,8 -12,8 q-10,1 -14,-6 z" fill="#e6d539" stroke="#111" stroke-width="0.91" />
<ellipse cx="803.0" cy="786.0" rx="4.0" ry="5.0" fill="#f5e94c" stroke="none" stroke-width="0" transform="rotate(0 803.0 786.0)" />
<path d="M878,662 q8,-6 16,-4 q10,2 10,8 q0,7 -10,8 q-8,1 -12,-3 z" fill="#e6d539" stroke="#111" stroke-width="0.91" />
<path d="M893,658 h6 q8,2 8,8 q0,6 -8,8 h-4 z" fill="#919191" stroke="#222" stroke-width="0.78" />
<ellipse cx="893.0" cy="667.0" rx="4.0" ry="5.0" fill="#f5e94c" stroke="none" stroke-width="0" transform="rotate(0 893.0 667.0)" />
<circle cx="662.0" cy="603.0" r="98.0" fill="url(#magG)" stroke="#111" stroke-width="1.17" />
<circle cx="662.0" cy="598.0" r="82.0" fill="#c4b32b" stroke="#111" stroke-width="1.04" />
<path d="M 583,620 A 82 82 0 0 0 735 636" fill="none" stroke="#e6d539" stroke-width="1.2" />
<circle cx="662.0" cy="598.0" r="46.0" fill="#c4b32b" stroke="#111" stroke-width="1.04" />
<circle cx="662.0" cy="598.0" r="40.0" fill="#c4b32b" stroke="#111" stroke-width="0.78" />
<path d="M650,760 Q640,735 655,712 Q675,690 705,697 Q745,690 760,720 Q770,745 760,775 Q745,797 700,796 Q668,790 650,760 Z" fill="#c4b32b" stroke="#111" stroke-width="1.17" />
<clipPath id="bossC"><path d="M650,760 Q640,735 655,712 Q675,690 705,697 Q745,690 760,720 Q770,745 760,775 Q745,797 700,796 Q668,790 650,760 Z"/></clipPath>
<g clip-path="url(#bossC)">
<circle cx="684.0" cy="737.0" r="57.0" fill="url(#bossH)" stroke="#111" stroke-width="0.91" />
<circle cx="681.0" cy="735.5" r="45.0" fill="url(#bossH)" stroke="#111" stroke-width="0.91" />
<circle cx="679.0" cy="734.5" r="32.0" fill="url(#bossH2)" stroke="#111" stroke-width="0.91" />
<circle cx="678.0" cy="734.0" r="23.0" fill="#c4b32b" stroke="#111" stroke-width="0.78" />
</g>
<path d="M760,720 Q772,690 790,655" fill="none" stroke="#111" stroke-width="0.91" />
<path d="M610,690 Q600,715 597,738 Q604,750 632,760 L650,760 L640,735 L640,700 Z" fill="#c4b32b" stroke="#111" stroke-width="1.04" />
<path d="M606,722 Q606,712 616,712 h10 v24 h-10 Q606,736 606,722 Z" fill="#a09220" stroke="#111" stroke-width="1.04" />
<ellipse cx="622.0" cy="724.0" rx="8.0" ry="11.0" fill="#f5e94c" stroke="#111" stroke-width="0.78" transform="rotate(0 622.0 724.0)" />
<ellipse cx="614.0" cy="724.0" rx="7.0" ry="10.0" fill="#c4b32b" stroke="#111" stroke-width="0.78" transform="rotate(0 614.0 724.0)" />
<circle cx="571.0" cy="555.0" r="5.0" fill="#9a9ab0" stroke="#111" stroke-width="1.3" />
<circle cx="571.0" cy="555.0" r="3.0" fill="#2a2a36" stroke="#ddd" stroke-width="0.8" />
<circle cx="574.0" cy="650.0" r="5.0" fill="#9a9ab0" stroke="#111" stroke-width="1.3" />
<circle cx="574.0" cy="650.0" r="3.0" fill="#2a2a36" stroke="#ddd" stroke-width="0.8" />
<path d="M705.0,694.0 q6,-6 14,-3 q4,4 0,10 q-8,3 -14,-1 z" fill="#e6d539" stroke="#111" stroke-width="0.91" />
<circle cx="705.0" cy="697.0" r="5.0" fill="#9a9ab0" stroke="#111" stroke-width="1.3" />
<circle cx="705.0" cy="697.0" r="3.0" fill="#2a2a36" stroke="#ddd" stroke-width="0.8" />
<path d="M786.0,642.5 q6,-6 14,-3 q4,4 0,10 q-8,3 -14,-1 z" fill="#e6d539" stroke="#111" stroke-width="0.91" />
<circle cx="786.0" cy="645.5" r="5.0" fill="#9a9ab0" stroke="#111" stroke-width="1.3" />
<circle cx="786.0" cy="645.5" r="3.0" fill="#2a2a36" stroke="#ddd" stroke-width="0.8" />
<path d="M821.5,469.5 q6,-6 14,-3 q4,4 0,10 q-8,3 -14,-1 z" fill="#e6d539" stroke="#111" stroke-width="0.91" />
<circle cx="821.5" cy="472.5" r="5.0" fill="#9a9ab0" stroke="#111" stroke-width="1.3" />
<circle cx="821.5" cy="472.5" r="3.0" fill="#2a2a36" stroke="#ddd" stroke-width="0.8" />
<path d="M878.5,555.0 q6,-6 14,-3 q4,4 0,10 q-8,3 -14,-1 z" fill="#e6d539" stroke="#111" stroke-width="0.91" />
<circle cx="878.5" cy="558.0" r="5.0" fill="#9a9ab0" stroke="#111" stroke-width="1.3" />
<circle cx="878.5" cy="558.0" r="3.0" fill="#2a2a36" stroke="#ddd" stroke-width="0.8" />
<path d="M441,635 Q470,662 507,680 Q545,696 585,700 L640,701 L640,717 L582,715 Q540,712 500,697 Q462,680 435,650 Z" fill="url(#armG)" stroke="#111" stroke-width="1.17" />
<path d="M444,636 Q472,662 509,679 Q546,694 586,698" fill="none" stroke="#5b5d75" stroke-width="1.2" stroke-dasharray="2 1"/>
<polyline points="582.0,700.0 582.0,715.0" fill="none" stroke="#111" stroke-width="0.91" />
<polyline points="588.0,700.0 588.0,715.0" fill="none" stroke="#111" stroke-width="0.91" />
<path d="M622,700 L640,701 Q652,705 660,716 L668,740 L660,752 L640,756 L630,748 Q628,720 622,716 Z" fill="#84869f" stroke="#111" stroke-width="1.04" />
<path d="M640,701 L655,703 Q660,712 662,722 L648,728 Z" fill="#6d6f88" stroke="#111" stroke-width="0.78" />
<polygon points="630.0,748.0 640.0,756.0 660.0,752.0 668.0,740.0 650.0,738.0 632.0,742.0" fill="#9a9cb6" stroke="#111" stroke-width="0.78" />
<circle cx="677.5" cy="734.0" r="16.0" fill="#84869f" stroke="#111" stroke-width="1.17" />
<circle cx="677.5" cy="734.0" r="9.0" fill="#4a4c60" stroke="#111" stroke-width="0.91" />
<circle cx="677.5" cy="734.0" r="7.5" fill="#f5e94c" stroke="#111" stroke-width="0.78" />
<circle cx="677.5" cy="734.0" r="5.5" fill="#c4b32b" stroke="none" stroke-width="0" />
<polygon points="690.0,741.0 704.0,738.0 712.0,748.0 700.0,760.0 692.0,762.0 686.0,750.0" fill="#8d8fa8" stroke="#111" stroke-width="0.91" />
<polygon points="688.0,756.0 696.0,754.0 698.0,764.0 691.0,766.0" fill="#b5b7cc" stroke="#111" stroke-width="0.78" />
<polyline points="694.0,744.0 706.0,746.0" fill="none" stroke="#111" stroke-width="0.78" />
<polygon points="423.5,636.0 441.5,634.0 444.0,663.0 428.0,664.5" fill="#a3a5c0" stroke="#111" stroke-width="1.04" />
<polyline points="430.0,637.0 434.0,663.0" fill="none" stroke="#dfe1f0" stroke-width="3" />
<ellipse cx="421.8" cy="567.5" rx="11.5" ry="4.0" fill="#1d1d1f" stroke="#000" stroke-width="0.78" transform="rotate(8 421.8 567.5)" />
<polyline points="413.8,566.2 425.8,564.8" fill="none" stroke="#6a6a6e" stroke-width="1" />
<ellipse cx="422.7" cy="573.3" rx="11.5" ry="4.0" fill="#1d1d1f" stroke="#000" stroke-width="0.78" transform="rotate(8 422.7 573.3)" />
<polyline points="414.7,572.0 426.7,570.6" fill="none" stroke="#6a6a6e" stroke-width="1" />
<ellipse cx="423.5" cy="579.2" rx="11.5" ry="4.0" fill="#1d1d1f" stroke="#000" stroke-width="0.78" transform="rotate(8 423.5 579.2)" />
<polyline points="415.5,577.9 427.5,576.5" fill="none" stroke="#6a6a6e" stroke-width="1" />
<ellipse cx="424.4" cy="585.0" rx="11.5" ry="4.0" fill="#1d1d1f" stroke="#000" stroke-width="0.78" transform="rotate(8 424.4 585.0)" />
<polyline points="416.4,583.7 428.4,582.3" fill="none" stroke="#6a6a6e" stroke-width="1" />
<ellipse cx="425.2" cy="590.8" rx="11.5" ry="4.0" fill="#1d1d1f" stroke="#000" stroke-width="0.78" transform="rotate(8 425.2 590.8)" />
<polyline points="417.2,589.5 429.2,588.1" fill="none" stroke="#6a6a6e" stroke-width="1" />
<ellipse cx="426.1" cy="596.7" rx="11.5" ry="4.0" fill="#1d1d1f" stroke="#000" stroke-width="0.78" transform="rotate(8 426.1 596.7)" />
<polyline points="418.1,595.4 430.1,594.0" fill="none" stroke="#6a6a6e" stroke-width="1" />
<ellipse cx="426.9" cy="602.5" rx="11.5" ry="4.0" fill="#1d1d1f" stroke="#000" stroke-width="0.78" transform="rotate(8 426.9 602.5)" />
<polyline points="418.9,601.2 430.9,599.8" fill="none" stroke="#6a6a6e" stroke-width="1" />
<ellipse cx="427.8" cy="608.3" rx="11.5" ry="4.0" fill="#1d1d1f" stroke="#000" stroke-width="0.78" transform="rotate(8 427.8 608.3)" />
<polyline points="419.8,607.0 431.8,605.6" fill="none" stroke="#6a6a6e" stroke-width="1" />
<ellipse cx="428.6" cy="614.2" rx="11.5" ry="4.0" fill="#1d1d1f" stroke="#000" stroke-width="0.78" transform="rotate(8 428.6 614.2)" />
<polyline points="420.6,612.9 432.6,611.5" fill="none" stroke="#6a6a6e" stroke-width="1" />
<ellipse cx="429.4" cy="620.0" rx="11.5" ry="4.0" fill="#1d1d1f" stroke="#000" stroke-width="0.78" transform="rotate(8 429.4 620.0)" />
<polyline points="421.4,618.7 433.4,617.3" fill="none" stroke="#6a6a6e" stroke-width="1" />
<ellipse cx="430.3" cy="625.8" rx="11.5" ry="4.0" fill="#1d1d1f" stroke="#000" stroke-width="0.78" transform="rotate(8 430.3 625.8)" />
<polyline points="422.3,624.5 434.3,623.1" fill="none" stroke="#6a6a6e" stroke-width="1" />
<ellipse cx="431.1" cy="631.7" rx="11.5" ry="4.0" fill="#1d1d1f" stroke="#000" stroke-width="0.78" transform="rotate(8 431.1 631.7)" />
<polyline points="423.1,630.4 435.1,629.0" fill="none" stroke="#6a6a6e" stroke-width="1" />
<ellipse cx="432.0" cy="637.5" rx="11.5" ry="4.0" fill="#1d1d1f" stroke="#000" stroke-width="0.78" transform="rotate(8 432.0 637.5)" />
<polyline points="424.0,636.2 436.0,634.8" fill="none" stroke="#6a6a6e" stroke-width="1" />
<polygon points="777.0,424.0 800.0,418.0 845.0,414.0 884.0,416.0 869.0,435.0 867.0,439.0 845.0,446.0 821.0,454.0 800.0,461.0 777.0,470.0" fill="#9fa1c6" stroke="#111" stroke-width="0.91" />
<polygon points="780.0,436.0 797.0,430.0 807.0,462.0 790.0,468.0" fill="url(#cylG)" stroke="#111" stroke-width="0.78" />
<polygon points="804.0,428.0 826.0,422.0 836.0,452.0 814.0,458.0" fill="url(#cylG)" stroke="#111" stroke-width="0.78" />
<polygon points="838.0,421.0 862.0,415.0 872.0,439.0 848.0,445.0" fill="url(#cylG)" stroke="#111" stroke-width="0.78" />
<polygon points="777.0,452.0 800.0,444.0 800.0,461.0 777.0,470.0" fill="#c9cbe6" stroke="#111" stroke-width="0.78" />
<polygon points="567.0,310.0 742.0,202.0 782.0,203.0 784.0,206.0 776.0,216.0 787.0,217.0 782.0,226.0 798.0,224.0 800.0,230.0 790.0,240.0 781.0,250.0 802.0,250.0 796.0,262.0 809.0,262.0 804.0,274.0 825.0,266.0 822.0,279.0 832.0,278.0 826.0,290.0 784.0,295.0 830.1,295.7 831.6,298.7 824.7,307.1 836.2,308.6 837.7,311.6 831.0,320.9 842.5,322.4 844.0,325.4 836.7,333.9 848.2,335.4 849.7,338.4 842.6,347.1 854.1,348.6 855.6,351.6 848.1,360.6 859.6,362.1 861.1,365.1 854.0,374.1 865.5,375.6 867.0,378.6 859.8,387.4 871.3,388.9 872.8,391.9 865.3,400.6 876.8,402.1 878.3,405.1 872.5,414.1 884.0,415.6 885.5,418.6 868.0,437.0 852.0,424.0 815.0,420.0 795.0,427.0 777.0,434.0 777.0,420.0 777.0,395.0 584.0,395.0 576.0,369.4 568.0,359.0 561.7,346.0 553.0,333.0" fill="#15172a" stroke="none" stroke-width="0" />
<clipPath id="fc"><polygon points="567.0,310.0 742.0,202.0 782.0,203.0 784.0,206.0 776.0,216.0 787.0,217.0 782.0,226.0 798.0,224.0 800.0,230.0 790.0,240.0 781.0,250.0 802.0,250.0 796.0,262.0 809.0,262.0 804.0,274.0 825.0,266.0 822.0,279.0 832.0,278.0 826.0,290.0 784.0,295.0 830.1,295.7 831.6,298.7 824.7,307.1 836.2,308.6 837.7,311.6 831.0,320.9 842.5,322.4 844.0,325.4 836.7,333.9 848.2,335.4 849.7,338.4 842.6,347.1 854.1,348.6 855.6,351.6 848.1,360.6 859.6,362.1 861.1,365.1 854.0,374.1 865.5,375.6 867.0,378.6 859.8,387.4 871.3,388.9 872.8,391.9 865.3,400.6 876.8,402.1 878.3,405.1 872.5,414.1 884.0,415.6 885.5,418.6 868.0,437.0 852.0,424.0 815.0,420.0 795.0,427.0 777.0,434.0 777.0,420.0 777.0,395.0 584.0,395.0 576.0,369.4 568.0,359.0 561.7,346.0 553.0,333.0"/></clipPath>
<g clip-path="url(#fc)">
<polygon points="540.0,317.1 680.0,235.9 705.0,224.4 705.0,227.6 680.0,239.1 540.0,320.3" fill="#41446e" stroke="none" stroke-width="0" />
<polygon points="540.0,320.3 660.0,250.7 660.0,252.1 540.0,321.7" fill="#6a6d9a" stroke="none" stroke-width="0" />
<polyline points="570.0,298.7 680.0,234.9 690.0,230.3 744.7,205.1" fill="none" stroke="#e4e6f8" stroke-width="2.2" />
<polygon points="540.0,331.3 680.0,250.1 703.0,239.5 703.0,242.7 680.0,253.3 540.0,334.5" fill="#41446e" stroke="none" stroke-width="0" />
<polygon points="540.0,334.5 660.0,264.9 660.0,266.3 540.0,335.9" fill="#6a6d9a" stroke="none" stroke-width="0" />
<polyline points="570.0,312.9 680.0,249.1 690.0,244.5 751.5,216.2" fill="none" stroke="#e4e6f8" stroke-width="2.2" />
<polygon points="540.0,345.5 680.0,264.3 701.0,254.6 701.0,257.8 680.0,267.5 540.0,348.7" fill="#41446e" stroke="none" stroke-width="0" />
<polygon points="540.0,348.7 660.0,279.1 660.0,280.5 540.0,350.1" fill="#6a6d9a" stroke="none" stroke-width="0" />
<polyline points="570.0,327.1 680.0,263.3 690.0,258.7 746.0,232.9" fill="none" stroke="#e4e6f8" stroke-width="2.2" />
<polygon points="540.0,359.7 680.0,278.5 699.0,269.8 699.0,273.0 680.0,281.7 540.0,362.9" fill="#41446e" stroke="none" stroke-width="0" />
<polygon points="540.0,362.9 660.0,293.3 660.0,294.7 540.0,364.3" fill="#6a6d9a" stroke="none" stroke-width="0" />
<polyline points="570.0,341.3 680.0,277.5 690.0,272.9 760.7,240.4" fill="none" stroke="#e4e6f8" stroke-width="2.2" />
<polygon points="540.0,373.9 680.0,292.7 697.0,284.9 697.0,288.1 680.0,295.9 540.0,377.1" fill="#41446e" stroke="none" stroke-width="0" />
<polygon points="540.0,377.1 660.0,307.5 660.0,308.9 540.0,378.5" fill="#6a6d9a" stroke="none" stroke-width="0" />
<polyline points="570.0,355.5 680.0,291.7 690.0,287.1 769.8,250.4" fill="none" stroke="#e4e6f8" stroke-width="2.2" />
<polygon points="540.0,388.1 680.0,306.9 695.0,300.0 695.0,303.2 680.0,310.1 540.0,391.3" fill="#41446e" stroke="none" stroke-width="0" />
<polygon points="540.0,391.3 660.0,321.7 660.0,323.1 540.0,392.7" fill="#6a6d9a" stroke="none" stroke-width="0" />
<polyline points="570.0,369.7 680.0,305.9 690.0,301.3 778.9,260.4" fill="none" stroke="#e4e6f8" stroke-width="2.2" />
<polygon points="540.0,402.3 680.0,321.1 693.0,315.1 693.0,318.3 680.0,324.3 540.0,405.5" fill="#41446e" stroke="none" stroke-width="0" />
<polygon points="540.0,405.5 660.0,335.9 660.0,337.3 540.0,406.9" fill="#6a6d9a" stroke="none" stroke-width="0" />
<polyline points="570.0,383.9 680.0,320.1 690.0,315.5 784.6,272.0" fill="none" stroke="#e4e6f8" stroke-width="2.2" />
<polygon points="540.0,416.5 680.0,335.3 691.0,330.2 691.0,333.4 680.0,338.5 540.0,419.7" fill="#41446e" stroke="none" stroke-width="0" />
<polygon points="540.0,419.7 660.0,350.1 660.0,351.5 540.0,421.1" fill="#6a6d9a" stroke="none" stroke-width="0" />
<polyline points="570.0,398.1 680.0,334.3 690.0,329.7 784.0,295.3" fill="none" stroke="#e4e6f8" stroke-width="2" />
<polyline points="700.0,328.6 778.0,299.3" fill="none" stroke="#3d4064" stroke-width="2.2" />
<polygon points="540.0,430.7 680.0,349.5 689.0,345.4 689.0,348.6 680.0,352.7 540.0,433.9" fill="#41446e" stroke="none" stroke-width="0" />
<polygon points="540.0,433.9 660.0,364.3 660.0,365.7 540.0,435.3" fill="#6a6d9a" stroke="none" stroke-width="0" />
<polyline points="570.0,412.3 680.0,348.5 690.0,343.9 790.4,308.5" fill="none" stroke="#e4e6f8" stroke-width="2" />
<polyline points="700.0,342.8 784.4,312.5" fill="none" stroke="#3d4064" stroke-width="2.2" />
<polygon points="540.0,444.9 680.0,363.7 687.0,360.5 687.0,363.7 680.0,366.9 540.0,448.1" fill="#41446e" stroke="none" stroke-width="0" />
<polygon points="540.0,448.1 660.0,378.5 660.0,379.9 540.0,449.5" fill="#6a6d9a" stroke="none" stroke-width="0" />
<polyline points="570.0,426.5 680.0,362.7 690.0,358.1 796.0,322.0" fill="none" stroke="#e4e6f8" stroke-width="2" />
<polyline points="700.0,357.0 790.0,326.0" fill="none" stroke="#3d4064" stroke-width="2.2" />
<polygon points="540.0,459.1 680.0,377.9 685.0,375.6 685.0,378.8 680.0,381.1 540.0,462.3" fill="#41446e" stroke="none" stroke-width="0" />
<polygon points="540.0,462.3 660.0,392.7 660.0,394.1 540.0,463.7" fill="#6a6d9a" stroke="none" stroke-width="0" />
<polyline points="570.0,440.7 680.0,376.9 690.0,372.3 802.0,335.3" fill="none" stroke="#e4e6f8" stroke-width="2" />
<polyline points="700.0,371.2 796.0,339.3" fill="none" stroke="#3d4064" stroke-width="2.2" />
<polygon points="540.0,473.3 680.0,392.1 683.0,390.7 683.0,393.9 680.0,395.3 540.0,476.5" fill="#41446e" stroke="none" stroke-width="0" />
<polygon points="540.0,476.5 660.0,406.9 660.0,408.3 540.0,477.9" fill="#6a6d9a" stroke="none" stroke-width="0" />
<polyline points="570.0,454.9 680.0,391.1 690.0,386.5 807.6,348.8" fill="none" stroke="#e4e6f8" stroke-width="2" />
<polyline points="700.0,385.4 801.6,352.8" fill="none" stroke="#3d4064" stroke-width="2.2" />
<polygon points="540.0,487.5 680.0,406.3 681.0,405.8 681.0,409.0 680.0,409.5 540.0,490.7" fill="#41446e" stroke="none" stroke-width="0" />
<polygon points="540.0,490.7 660.0,421.1 660.0,422.5 540.0,492.1" fill="#6a6d9a" stroke="none" stroke-width="0" />
<polyline points="570.0,469.1 680.0,405.3 690.0,400.7 813.5,362.2" fill="none" stroke="#e4e6f8" stroke-width="2" />
<polyline points="700.0,399.6 807.5,366.2" fill="none" stroke="#3d4064" stroke-width="2.2" />
<polygon points="540.0,501.7 680.0,420.5 679.0,421.1 679.0,424.3 680.0,423.7 540.0,504.9" fill="#41446e" stroke="none" stroke-width="0" />
<polygon points="540.0,504.9 660.0,435.3 660.0,436.7 540.0,506.3" fill="#6a6d9a" stroke="none" stroke-width="0" />
<polyline points="570.0,483.3 680.0,419.5 690.0,414.9 819.4,375.5" fill="none" stroke="#e4e6f8" stroke-width="2" />
<polyline points="700.0,413.8 813.4,379.5" fill="none" stroke="#3d4064" stroke-width="2.2" />
<polygon points="540.0,515.9 680.0,434.7 677.0,436.4 677.0,439.6 680.0,437.9 540.0,519.1" fill="#41446e" stroke="none" stroke-width="0" />
<polygon points="540.0,519.1 660.0,449.5 660.0,450.9 540.0,520.5" fill="#6a6d9a" stroke="none" stroke-width="0" />
<polyline points="570.0,497.5 680.0,433.7 690.0,429.1 825.0,389.0" fill="none" stroke="#e4e6f8" stroke-width="2" />
<polyline points="700.0,428.0 819.0,393.0" fill="none" stroke="#3d4064" stroke-width="2.2" />
<polygon points="540.0,530.1 680.0,448.9 675.0,451.8 675.0,455.0 680.0,452.1 540.0,533.3" fill="#41446e" stroke="none" stroke-width="0" />
<polygon points="540.0,533.3 660.0,463.7 660.0,465.1 540.0,534.7" fill="#6a6d9a" stroke="none" stroke-width="0" />
<polyline points="570.0,511.7 680.0,447.9 690.0,443.3 831.0,402.3" fill="none" stroke="#e4e6f8" stroke-width="2" />
<polyline points="700.0,442.2 825.0,406.3" fill="none" stroke="#3d4064" stroke-width="2.2" />
<polygon points="540.0,544.3 680.0,463.1 673.0,467.2 673.0,470.4 680.0,466.3 540.0,547.5" fill="#41446e" stroke="none" stroke-width="0" />
<polygon points="540.0,547.5 660.0,477.9 660.0,479.3 540.0,548.9" fill="#6a6d9a" stroke="none" stroke-width="0" />
<polyline points="570.0,525.9 680.0,462.1 690.0,457.5 845.8,414.3" fill="none" stroke="#e4e6f8" stroke-width="2" />
<polyline points="700.0,456.4 839.8,418.3" fill="none" stroke="#3d4064" stroke-width="2.2" />
</g>
<polyline points="784.0,295.3 829.1,296.0" fill="none" stroke="#7f82a6" stroke-width="1.3" />
<polyline points="790.4,308.5 835.2,308.9" fill="none" stroke="#7f82a6" stroke-width="1.3" />
<polyline points="796.0,322.0 841.5,322.7" fill="none" stroke="#7f82a6" stroke-width="1.3" />
<polyline points="802.0,335.3 847.2,335.7" fill="none" stroke="#7f82a6" stroke-width="1.3" />
<polyline points="807.6,348.8 853.1,348.9" fill="none" stroke="#7f82a6" stroke-width="1.3" />
<polyline points="813.5,362.2 858.6,362.4" fill="none" stroke="#7f82a6" stroke-width="1.3" />
<polyline points="819.4,375.5 864.5,375.9" fill="none" stroke="#7f82a6" stroke-width="1.3" />
<polyline points="825.0,389.0 870.3,389.2" fill="none" stroke="#7f82a6" stroke-width="1.3" />
<polyline points="831.0,402.3 875.8,402.4" fill="none" stroke="#7f82a6" stroke-width="1.3" />
<polyline points="845.8,414.3 883.0,415.9" fill="none" stroke="#7f82a6" stroke-width="1.3" />
<polygon points="781.0,238.0 797.0,224.0 801.0,229.0 785.0,243.0" fill="#9a9aa0" stroke="#333" stroke-width="0.65" />
<polygon points="786.0,291.0 810.0,272.0 815.0,278.0 792.0,296.0" fill="#9a9aa4" stroke="#333" stroke-width="0.65" />
<ellipse cx="760.0" cy="228.0" rx="2.5" ry="3.5" fill="#e8d8c0" stroke="#333" stroke-width="0.65" transform="rotate(0 760.0 228.0)" />
<ellipse cx="801.0" cy="276.0" rx="2.5" ry="3.5" fill="#e8d8c0" stroke="#333" stroke-width="0.65" transform="rotate(0 801.0 276.0)" />
<defs><linearGradient id="colL" gradientUnits="userSpaceOnUse" x1="-10" y1="5.600" x2="10" y2="-5.600"><stop offset="0" stop-color="#4e5078"/><stop offset="0.350" stop-color="#ffffff"/><stop offset="0.650" stop-color="#c0c2e2"/><stop offset="1" stop-color="#50527a"/></linearGradient></defs>
<g clip-path="url(#fc)">
<g transform="translate(605.3 289.9)"><polygon points="-10.5,0.4 10.5,-11.4 10.5,-0.4 -10.5,11.4" fill="url(#colL)" stroke="#111" stroke-width="0.500"/></g>
<g transform="translate(616.7 302.1)"><polygon points="-10.5,0.4 10.5,-11.4 10.5,-0.4 -10.5,11.4" fill="url(#colL)" stroke="#111" stroke-width="0.500"/></g>
<g transform="translate(625.6 314.3)"><polygon points="-10.5,0.4 10.5,-11.4 10.5,-0.4 -10.5,11.4" fill="url(#colL)" stroke="#111" stroke-width="0.500"/></g>
<g transform="translate(634.6 325.7)"><polygon points="-10.5,0.4 10.5,-11.4 10.5,-0.4 -10.5,11.4" fill="url(#colL)" stroke="#111" stroke-width="0.500"/></g>
<g transform="translate(643.5 338.0)"><polygon points="-10.5,0.4 10.5,-11.4 10.5,-0.4 -10.5,11.4" fill="url(#colL)" stroke="#111" stroke-width="0.500"/></g>
<g transform="translate(650.9 349.3)"><polygon points="-10.5,0.4 10.5,-11.4 10.5,-0.4 -10.5,11.4" fill="url(#colL)" stroke="#111" stroke-width="0.500"/></g>
<g transform="translate(659.0 361.0)"><polygon points="-10.5,0.4 10.5,-11.4 10.5,-0.4 -10.5,11.4" fill="url(#colL)" stroke="#111" stroke-width="0.500"/></g>
<g transform="translate(659.0 259.8)"><polygon points="-10.5,0.4 10.5,-11.4 10.5,-0.4 -10.5,11.4" fill="url(#colL)" stroke="#111" stroke-width="0.500"/></g>
<g transform="translate(666.3 268.7)"><polygon points="-10.5,0.4 10.5,-11.4 10.5,-0.4 -10.5,11.4" fill="url(#colL)" stroke="#111" stroke-width="0.500"/></g>
<g transform="translate(673.7 281.0)"><polygon points="-10.5,0.4 10.5,-11.4 10.5,-0.4 -10.5,11.4" fill="url(#colL)" stroke="#111" stroke-width="0.500"/></g>
<g transform="translate(681.8 291.5)"><polygon points="-10.5,0.4 10.5,-11.4 10.5,-0.4 -10.5,11.4" fill="url(#colL)" stroke="#111" stroke-width="0.500"/></g>
<g transform="translate(689.1 303.7)"><polygon points="-10.5,0.4 10.5,-11.4 10.5,-0.4 -10.5,11.4" fill="url(#colL)" stroke="#111" stroke-width="0.500"/></g>
<g transform="translate(696.5 315.1)"><polygon points="-10.5,0.4 10.5,-11.4 10.5,-0.4 -10.5,11.4" fill="url(#colL)" stroke="#111" stroke-width="0.500"/></g>
<g transform="translate(703.8 328.2)"><polygon points="-10.5,0.4 10.5,-11.4 10.5,-0.4 -10.5,11.4" fill="url(#colL)" stroke="#111" stroke-width="0.500"/></g>
<g transform="translate(711.1 341.2)"><polygon points="-10.5,0.4 10.5,-11.4 10.5,-0.4 -10.5,11.4" fill="url(#colL)" stroke="#111" stroke-width="0.500"/></g>
<g transform="translate(718.0 354.0)"><polygon points="-10.5,0.4 10.5,-11.4 10.5,-0.4 -10.5,11.4" fill="url(#colL)" stroke="#111" stroke-width="0.500"/></g>
<g transform="translate(709.5 261.4)"><polygon points="-4.5,-0.5 4.5,-5.5 4.5,0.5 -4.5,5.5" fill="url(#colL)" stroke="#111" stroke-width="0.500"/></g>
<g transform="translate(714.4 274.4)"><polygon points="-4.5,-0.5 4.5,-5.5 4.5,0.5 -4.5,5.5" fill="url(#colL)" stroke="#111" stroke-width="0.500"/></g>
<g transform="translate(720.0 288.3)"><polygon points="-4.5,-0.5 4.5,-5.5 4.5,0.5 -4.5,5.5" fill="url(#colL)" stroke="#111" stroke-width="0.500"/></g>
<g transform="translate(725.8 302.0)"><polygon points="-4.5,-0.5 4.5,-5.5 4.5,0.5 -4.5,5.5" fill="url(#colL)" stroke="#111" stroke-width="0.500"/></g>
<g transform="translate(732.3 315.0)"><polygon points="-4.5,-0.5 4.5,-5.5 4.5,0.5 -4.5,5.5" fill="url(#colL)" stroke="#111" stroke-width="0.500"/></g>
<g transform="translate(739.0 328.0)"><polygon points="-4.5,-0.5 4.5,-5.5 4.5,0.5 -4.5,5.5" fill="url(#colL)" stroke="#111" stroke-width="0.500"/></g>
<g transform="translate(746.0 341.0)"><polygon points="-4.5,-0.5 4.5,-5.5 4.5,0.5 -4.5,5.5" fill="url(#colL)" stroke="#111" stroke-width="0.500"/></g>
</g>
<polygon points="568.0,301.0 574.8,297.3 733.0,206.0 742.0,202.0 744.0,204.0 567.0,312.0" fill="#9ea1ca" stroke="#111" stroke-width="0.78" />
<polyline points="566.0,306.0 742.0,200.5" fill="none" stroke="#e4e6f8" stroke-width="1.2" />
<circle cx="620.0" cy="192.5" r="10.0" fill="#c9cbe8" stroke="#111" stroke-width="1.04" />
<circle cx="620.5" cy="193.5" r="4.2" fill="#fff" stroke="#111" stroke-width="1.04" />
<polygon points="556.5,264.0 556.5,257.0 559.0,252.0 575.0,236.5 590.0,221.0 609.5,203.5 625.0,195.0 641.0,188.7 660.0,183.5 658.0,175.6 689.4,166.0 709.4,165.2 714.6,170.4 733.0,205.0 741.6,202.6 742.0,204.0 733.0,208.0 661.6,245.0 607.8,275.6 574.8,297.3 562.6,281.6" fill="url(#vcG)" stroke="#111" stroke-width="1.17" />
<polygon points="556.5,257.0 559.0,252.0 575.0,236.5 590.0,221.0 609.5,203.5 625.0,195.0 641.0,188.7 660.0,183.5 661.6,188.0 640.8,196.5 609.5,212.0 576.5,241.7 562.6,259.0 560.0,266.0" fill="#d4d6ef" stroke="#111" stroke-width="0.78" />
<polyline points="576.0,240.0 580.0,246.0" fill="none" stroke="#111" stroke-width="0.78" />
<polyline points="640.0,189.0 642.0,197.0" fill="none" stroke="#111" stroke-width="0.78" />
<polygon points="556.5,264.0 560.0,266.0 566.0,283.0 574.8,297.3 562.6,281.6" fill="#c6c8e6" stroke="#111" stroke-width="0.78" />
<path d="M598,268 Q600,238 628,232 Q650,232 656,248" fill="none" stroke="#111" stroke-width="0.91" />
<path d="M604,266 Q606,244 628,239 Q646,239 651,250" fill="none" stroke="#111" stroke-width="0.91" />
<path d="M607,275 Q610,252 630,246 Q648,247 652,258 L 610,280 Z" fill="#bdbfe0" stroke="#111" stroke-width="0.78" />
<polygon points="660.0,183.5 658.0,175.6 689.4,166.0 709.4,165.2 714.6,170.4 733.0,205.0 720.0,211.0 700.0,222.0 680.0,233.0 672.0,212.0" fill="#d9dbf2" stroke="#111" stroke-width="0.91" />
<polygon points="696.4,173.0 709.4,167.0 731.0,203.4 720.7,210.4" fill="#b4b6ba" stroke="#111" stroke-width="0.78" />
<polygon points="663.0,184.0 696.0,173.0 700.0,180.0 668.0,191.0" fill="#9a9cd0" stroke="#111" stroke-width="0.65" />
<polygon points="668.0,191.0 690.0,184.0 706.0,216.0 686.0,228.0" fill="url(#cylG)" stroke="#111" stroke-width="0.65" />
<polygon points="688.0,196.0 696.0,192.0 708.0,214.0 700.0,219.0" fill="url(#cylG)" stroke="#111" stroke-width="0.65" />
<ellipse cx="663.0" cy="176.0" rx="4.0" ry="2.5" fill="#a0a0a8" stroke="#111" stroke-width="0.78" transform="rotate(0 663.0 176.0)" />
<ellipse cx="693.0" cy="166.0" rx="4.0" ry="2.5" fill="#a0a0a8" stroke="#111" stroke-width="0.78" transform="rotate(0 693.0 166.0)" />
<ellipse cx="709.0" cy="166.0" rx="4.0" ry="2.5" fill="#a0a0a8" stroke="#111" stroke-width="0.78" transform="rotate(0 709.0 166.0)" />
<polygon points="726.0,194.0 732.0,191.0 738.0,203.0 732.0,206.0" fill="#d8d8de" stroke="#111" stroke-width="0.65" />
<g transform="translate(589.5 256.4)"><polygon points="-10.0,4.0 10.0,-3.0 25.0,23.0 5.0,30.0" fill="url(#colL)" stroke="#111" stroke-width="0.600"/></g>
<polygon points="581.5,256.4 584.5,250.4 592.5,248.4 597.5,251.4 597.5,257.4 587.5,261.4" fill="#5a5b66" stroke="#111" stroke-width="0.91" />
<polygon points="584.5,250.4 592.5,248.4 597.5,251.4 590.5,254.4" fill="#77788a" stroke="#111" stroke-width="0.65" />
<g transform="translate(640.0 221.7)"><polygon points="-10.0,4.0 10.0,-3.0 26.0,24.7 6.0,31.7" fill="url(#colL)" stroke="#111" stroke-width="0.600"/></g>
<polygon points="632.0,221.7 635.0,215.7 643.0,213.7 648.0,216.7 648.0,222.7 638.0,226.7" fill="#5a5b66" stroke="#111" stroke-width="0.91" />
<polygon points="635.0,215.7 643.0,213.7 648.0,216.7 641.0,219.7" fill="#77788a" stroke="#111" stroke-width="0.65" />
<polygon points="545.0,313.0 557.0,308.0 566.0,311.0 553.0,333.0 562.0,346.0 568.0,359.0 576.0,369.0 585.0,375.0 585.0,388.0 572.0,387.0 548.0,381.0 537.0,378.0 539.0,345.0" fill="#34364a" stroke="#111" stroke-width="0.91" />
<path d="M554,309 Q543,340 548,381" fill="none" stroke="#8c8ea2" stroke-width="4.5" />
<path d="M551.500,309 Q540.500,340 545.500,380" fill="none" stroke="#15172a" stroke-width="0.8" />
<path d="M557,309 Q546,340 551,382" fill="none" stroke="#15172a" stroke-width="0.8" />
<path d="M548,312 Q537,342 542,379" fill="none" stroke="#5d5f80" stroke-width="2" />
<polyline points="556.0,352.0 580.0,362.0" fill="none" stroke="#15172a" stroke-width="0.8" />
<polyline points="553.0,372.0 584.0,381.0" fill="none" stroke="#55576e" stroke-width="2.5" />
<polygon points="557.0,308.0 566.0,311.0 553.0,333.0 550.0,331.0" fill="#15172a" stroke="none" stroke-width="0" />
<polygon points="496.0,283.5 512.0,287.4 530.0,306.0 555.0,310.0 548.0,330.0 542.0,356.0 547.0,382.0 535.5,376.0 516.0,357.0 500.0,345.0 480.0,320.0" fill="#b9bbdf" stroke="#111" stroke-width="1.04" />
<polygon points="512.0,287.4 530.0,306.0 524.0,326.0 516.0,320.0 506.0,300.0" fill="#e8eaf8" stroke="#111" stroke-width="0.65" />
<polygon points="530.0,306.0 555.0,310.0 548.0,330.0 544.0,350.0 524.0,340.0 524.0,326.0" fill="#d2d4ee" stroke="#111" stroke-width="0.65" />
<polyline points="538.0,308.0 530.0,340.0" fill="none" stroke="#111" stroke-width="0.78" />
<polygon points="494.0,263.0 508.0,255.0 559.0,303.0 546.0,313.0" fill="#c8caea" stroke="#111" stroke-width="0.91" />
<polyline points="503.0,262.0 552.0,308.0" fill="none" stroke="#fff" stroke-width="4" />
<polygon points="494.0,263.0 508.0,255.0 527.0,273.0 515.0,282.0" fill="#3e3e44" stroke="#111" stroke-width="0.91" />
<polyline points="501.0,261.0 518.0,277.0" fill="none" stroke="#77777c" stroke-width="2" />
<polygon points="480.0,240.0 490.0,235.0 499.0,252.0 491.0,258.0" fill="#222226" stroke="#000" stroke-width="0.78" />
<polyline points="481.9,243.8 490.9,238.8" fill="none" stroke="#555" stroke-width="0.8" />
<polyline points="483.2,248.0 492.2,243.0" fill="none" stroke="#555" stroke-width="0.8" />
<polyline points="484.6,252.2 493.6,247.2" fill="none" stroke="#555" stroke-width="0.8" />
<polygon points="501.0,242.0 508.0,238.0 520.0,241.0 519.0,252.0 510.0,258.0 497.0,262.0 492.0,258.0 499.0,252.0" fill="#1f1f24" stroke="#000" stroke-width="0.78" />
<ellipse cx="506.5" cy="248.0" rx="1.3" ry="2.0" fill="#999" stroke="#000" stroke-width="0.52" transform="rotate(0 506.5 248.0)" />
<ellipse cx="495.0" cy="256.0" rx="1.3" ry="2.0" fill="#999" stroke="#000" stroke-width="0.52" transform="rotate(0 495.0 256.0)" />
<path d="M475,282.500 L496,283.500 Q503,288 500,300 L470,362 L466,360 Q455,345 453.500,322 Q455,298 475,282.500 Z" fill="#8a8cb8" stroke="#111" stroke-width="1.04" />
<path d="M477.0,283.0 Q457.0,305.0 458.5,341.0" fill="none" stroke="#2c2e48" stroke-width="1.2" />
<path d="M480.2,283.3 Q460.2,305.0 461.7,343.5" fill="none" stroke="#d5d7ee" stroke-width="1.2" />
<path d="M483.4,283.6 Q463.4,305.0 464.9,346.0" fill="none" stroke="#2c2e48" stroke-width="1.2" />
<path d="M486.6,283.9 Q466.6,305.0 468.1,348.5" fill="none" stroke="#d5d7ee" stroke-width="1.2" />
<path d="M489.8,284.2 Q469.8,305.0 471.3,351.0" fill="none" stroke="#2c2e48" stroke-width="1.2" />
<path d="M493.0,284.5 Q473.0,305.0 474.5,353.5" fill="none" stroke="#d5d7ee" stroke-width="1.2" />
<path d="M496.2,284.8 Q476.2,305.0 477.7,356.0" fill="none" stroke="#2c2e48" stroke-width="1.2" />
<polygon points="479.8,302.0 490.6,298.2 500.0,303.0 516.0,317.7 522.0,345.0 516.0,356.8 508.0,356.0 500.0,345.0 480.0,320.0" fill="#26262c" stroke="#000" stroke-width="0.91" />
<polygon points="467.0,329.4 488.6,311.9 506.2,312.8 514.0,325.5 508.2,345.0 480.8,354.8 474.0,349.0" fill="#2a2a30" stroke="#000" stroke-width="0.91" />
<polygon points="455.4,343.0 467.0,333.0 476.0,349.0 466.2,359.7" fill="#1e1e22" stroke="#000" stroke-width="0.91" />
<polyline points="470.0,330.0 489.0,314.5 505.0,315.0" fill="none" stroke="#55555e" stroke-width="1" />
<circle cx="487.0" cy="306.0" r="3.0" fill="#b8bade" stroke="#111" stroke-width="0.91" />
<circle cx="487.0" cy="306.0" r="1.3" fill="#555" stroke="none" stroke-width="0" />
<circle cx="512.0" cy="351.0" r="3.0" fill="#b8bade" stroke="#111" stroke-width="0.91" />
<circle cx="512.0" cy="351.0" r="1.3" fill="#555" stroke="none" stroke-width="0" />
<polygon points="535.0,376.0 547.0,382.0 545.0,388.0 536.0,386.0" fill="#b0b2c8" stroke="#111" stroke-width="0.78" />
</svg>
<!--/ENGINE-->

<!--VIEWS-PANEL-->
<!-- view cube -->
<svg class="abs" style="left:820px;top:130px" width="160" height="140" viewBox="820 130 160 140">
<g stroke="#2a6f9c" stroke-width="0.800" stroke-linejoin="round">
<polygon points="880,146.400 904.300,146 960.100,192 936.300,191.600" fill="#838383"/>
<polygon points="936.300,191.600 960.100,192 918.500,250.800 893.700,251.300" fill="#828282"/>
<polygon points="837.500,204.800 880,146.400 936.300,191.600 893.700,251.300" fill="#818181"/>
</g>
<text transform="matrix(0.588 -0.809 0.779 0.627 879.500 222.400)" font-family="Liberation Sans, sans-serif" font-size="24" fill="#1a1a1a" textLength="48" lengthAdjust="spacingAndGlyphs">BACK</text>
<text transform="matrix(1 0 0.770 0.640 924.200 174.800)" font-family="Liberation Sans, sans-serif" font-size="30" font-weight="bold" fill="#1c1c1c" textLength="8" lengthAdjust="spacingAndGlyphs">LEFT</text>
<text transform="matrix(1 0 -0.580 0.810 911.700 229.900)" font-family="Liberation Sans, sans-serif" font-size="30" font-weight="bold" fill="#1c1c1c" textLength="20" lengthAdjust="spacingAndGlyphs">BOTTOM</text>
</svg>
<!-- axis triad -->
<svg class="abs" style="left:390px;top:710px" width="140" height="100" viewBox="390 710 140 100">
<defs>
<linearGradient id="axB" x1="0" y1="0" x2="1" y2="1" gradientUnits="objectBoundingBox"><stop offset="0" stop-color="#1b3690"/><stop offset="0.5" stop-color="#3a62d8"/><stop offset="1" stop-color="#1b3690"/></linearGradient>
<radialGradient id="axG" cx="0.45" cy="0.4" r="0.6"><stop offset="0" stop-color="#5fae35"/><stop offset="1" stop-color="#2f7216"/></radialGradient>
</defs>
<ellipse cx="477" cy="790.500" rx="9" ry="10" fill="url(#axG)"/>
<path d="M459 795l8 3 10 1v-8l-12-3z" fill="#3f8a22"/>
<path d="M462 783L423 753L416 762L457 793z" fill="#2848b4"/><path d="M459.500 785.500L423 757.500" stroke="#3e68e0" stroke-width="3"/>
<path d="M411.200 750.400L427 750.700L414.100 765.600z" fill="#14266e"/><path d="M413 752l9 0.500-3 5z" fill="#3a62d8"/>
<path d="M459.500 786L486.100 744L494.600 749.500L468.200 791.500z" fill="#a23a4a"/><path d="M466 789L490.500 750.500" stroke="#8a2e3e" stroke-width="2.500"/>
<path d="M497.500 739.100L483.200 742.400L498.600 753.400z" fill="#b04050"/><ellipse cx="491.500" cy="748" rx="2.500" ry="1.500" fill="#e8a0a8" transform="rotate(35 491.500 748)"/>
<text x="398" y="749" font-family="Liberation Sans, sans-serif" font-size="18" fill="#3a5fd0" textLength="8.500" lengthAdjust="spacingAndGlyphs">Z</text>
<text x="500.500" y="735" font-family="Liberation Sans, sans-serif" font-size="18" fill="#b23a4a" textLength="8.500" lengthAdjust="spacingAndGlyphs">X</text>
</svg>
<!-- views panel -->
<div class="abs" style="left:1004px;top:100px;width:333px;height:789px;background:#fff;border:1px solid #d2d2d2;box-sizing:border-box;"></div>
<div class="t" style="left:1013px;top:109.500px;font-size:18.500px;color:#8e8e8e;transform:scaleX(0.847);" id="vw">Views</div>
<svg class="abs" style="left:1314px;top:112px" width="11" height="12" viewBox="0 0 11 12"><path d="M3.500 1h4v4.500h-4z" fill="#777" stroke="#333" stroke-width="0.900"/><path d="M1.500 5.800h8M5.500 6v5" stroke="#222" stroke-width="1.100"/></svg>
<svg class="abs" style="left:1190px;top:136px" width="140" height="18" viewBox="1190 136 140 18">
<circle cx="1198.500" cy="145.200" r="7.300" fill="#111"/><path d="M1198.500 141v8.400M1194.300 145.200h8.400" stroke="#fff" stroke-width="2.200"/>
<circle cx="1228.400" cy="145.200" r="7.300" fill="#111"/><path d="M1224.200 145.200h8.400" stroke="#fff" stroke-width="2.400"/>
<path d="M1245.200 137v15.500" stroke="#c4c4c4" stroke-width="1.200"/>
<g stroke="#111" fill="none"><path d="M1256.300 138.500l6 9M1265.300 138.500l-6 9" stroke-width="1.700"/><circle cx="1257" cy="149.500" r="2" stroke-width="1.400"/><circle cx="1264.600" cy="149.500" r="2" stroke-width="1.400"/></g>
<path d="M1283 141h7v12h-7zM1287 138h6l4 4v8h-6v-9.500h-4z" fill="#111"/><path d="M1293 138v4h4" stroke="#fff" stroke-width="0.800" fill="none"/>
<g opacity="0.200"><rect x="1313.500" y="140" width="11" height="12.500" fill="#555"/><rect x="1316.500" y="137.500" width="5" height="4" fill="#333"/><rect x="1318" y="144" width="8" height="10" fill="#999" stroke="#555" stroke-width="0.600"/></g>
</svg>
<div class="abs" style="left:1005px;top:161px;width:331px;height:703px;border:1px solid #d0d0d0;border-left:none;box-sizing:border-box;"></div>
<div class="abs" style="left:1025px;top:162px;width:311px;height:28px;border-left:1px solid #d0d0d0;border-bottom:1px solid #d0d0d0;box-sizing:border-box;"></div>
<svg class="abs" style="left:1013px;top:173px" width="6" height="6"><use href="#exp"/></svg>
<div class="t" style="left:1031px;top:169.500px;font-size:12px;color:#222;transform:scaleX(0.982);" id="v1">3D CAD Assembly - A</div>
<div class="abs" style="left:1045px;top:190px;width:291px;height:25px;background:#dcdcdc;"></div>
<div class="t" style="left:1051px;top:199.500px;font-size:12px;color:#222;transform:scaleX(0.98);" id="v2">Master View</div>
<svg class="abs" style="left:1312px;top:194px" width="16" height="16" viewBox="0 0 16 16"><path d="M0.500 15.500l1.200-4.500L11 1.700l3.300 3.300L5 14.300z" fill="#111"/><path d="M12 0.700l1.200-.5 2.600 2.600-.5 1.200z" fill="#111"/><path d="M1 15l.6-2 1.400 1.400z" fill="#fff"/></svg>
<div class="abs" style="left:1005px;top:865px;width:331px;height:23px;background:#d4d4d4;"></div>
<div class="abs" style="left:1005px;top:865px;width:40px;height:23px;background:#fff;"></div>
<div class="t" style="left:1010px;top:871px;font-size:12px;color:#2d7fcb;transform:scaleX(0.956);" id="v3">Views</div>
<div class="t" style="left:1051px;top:871px;font-size:12px;color:#222;transform:scaleX(0.913);" id="v4">Part Tree</div>
<!--/VIEWS-PANEL-->

<!--BOTTOM-TOOLBAR-->
<!-- bottom toolbar -->
<div class="abs" style="left:428px;top:830px;width:503px;height:45px;border:1px solid #6a6a6a;border-radius:6px;box-sizing:border-box;background:#fff;"></div>
<div class="abs" style="left:477px;top:831px;width:1px;height:43px;background:#6a6a6a;"></div>
<div class="abs" style="left:579px;top:831px;width:1px;height:43px;background:#6a6a6a;"></div>
<div class="abs" style="left:730px;top:831px;width:1px;height:43px;background:#6a6a6a;"></div>
<div class="abs" style="left:833px;top:831px;width:1px;height:43px;background:#6a6a6a;"></div>
<div class="abs" style="left:637px;top:836px;width:36px;height:36px;border:1px solid #c8c8c8;box-sizing:border-box;"></div>
<svg class="abs" style="left:428px;top:830px" width="503" height="45" viewBox="428 830 503 45" fill="none" stroke="#666" stroke-width="1.600" stroke-linejoin="round" stroke-linecap="round">
<!-- home -->
<path d="M435 852.500L450 839l15 13.500"/><path d="M438.500 850v17h23v-17"/><path d="M446.500 867v-9.500h7v9.500"/>
<!-- eye -->
<path d="M510 840l-21 13 21 13"/><path d="M499.500 847c3.500 3.500 3.500 8.500 0 12"/><ellipse cx="500.800" cy="853" rx="1.300" ry="2.500" fill="#666" stroke="none"/><path d="M506 853h12" stroke-dasharray="1.500 1.500" stroke-width="1"/>
<!-- cube -->
<path d="M538.500 845.500l6-6.500h18a2.500 2.500 0 0 1 2.500 2.500v17.500l-6 7h-18a2.500 2.500 0 0 1-2.500-2.500z" fill="#d8d8d8"/><path d="M538.500 845.500h18a2.500 2.500 0 0 1 2.500 2.500v18M558.300 846l6-6.500" />
<!-- a + cursor -->
<path d="M608 854l2.500 15 3.500-4.500 6 1.500 3-2z" stroke-width="1.400"/>
<!-- cursor selected -->
<path d="M645 843.500l4.500 21.500 4.500-6 8 1.500 2.500-2.500z" stroke-width="1.500"/>
<!-- orbit -->
<ellipse cx="703" cy="853" rx="15" ry="8.500"/><ellipse cx="703" cy="853" rx="8.500" ry="15"/><ellipse cx="703" cy="853" rx="11.500" ry="5.500" stroke-width="1.100"/><path d="M697 848h9v9h-9z" fill="#666" stroke="none"/><path d="M703 860v-8M700 855l3-3.500 3 3.500" stroke="#fff" stroke-width="1.500"/>
<!-- boxes -->
<path d="M757 839.500l10 4.500-10 4.500-10-4.500z"/><path d="M745 849.500l10.500 5v11.500l-10.500-5zM769.500 849.500l-10.500 5v11.500l10.500-5z"/><path d="M745 849.500l2-1M769.500 849.500l-2-1"/>
<!-- 3d box blue -->
<path d="M797 846h19v15h-19z" fill="#cfe6f4" stroke="#9ac8e4" stroke-width="1.200"/><path d="M793.500 849l4-5.500h18.500v14l-4 5.500h-16.500a2 2 0 0 1-2-2z"/><path d="M793.500 849h16.500a2 2 0 0 1 2 2v12M811.500 849.500l4.500-6"/>
<!-- camera -->
<path d="M846 848.500a2.500 2.500 0 0 1 2.500-2.500h4.500l1.500-3.500h9l1.500 3.500h5a2.500 2.500 0 0 1 2.500 2.500v13.500a2.500 2.500 0 0 1-2.500 2.500h-21.500a2.500 2.500 0 0 1-2.500-2.500z"/><circle cx="859" cy="855" r="6.300"/>
<!-- gear -->
<g transform="translate(907 853)"><circle r="5.300"/><path d="M-2.200-14.500h4.400l.9 3.600 2.400 1 3.200-1.900 3.100 3.100-1.900 3.200 1 2.400 3.600.9v4.400l-3.600.9-1 2.400 1.900 3.200-3.100 3.100-3.200-1.900-2.400 1-.9 3.600h-4.400l-.9-3.600-2.400-1-3.200 1.900-3.100-3.100 1.900-3.200-1-2.400-3.600-.9v-4.400l3.600-.9 1-2.400-1.900-3.200 3.100-3.100 3.200 1.900 2.400-1z"/></g>
<path d="M604.500 836l2.500-2 2.500 2zM652.300 836l2.500-2 2.500 2z" stroke="#bbb" stroke-width="0.800"/>
</svg>
<div class="t" style="left:588.500px;top:838px;font-size:21px;color:#777;font-family:'DejaVu Sans',sans-serif;">a</div>
<!--/BOTTOM-TOOLBAR-->

<!--COLOR-PICKER-->
<!-- color picker -->
<div class="abs" style="left:584px;top:360px;width:194px;height:273px;background:#fff;border:1px solid #9a9a9a;box-sizing:border-box;"></div>
<div class="abs" style="left:585px;top:361px;width:192px;height:27px;background:#b1b1b1;"></div>
<div class="t b" style="left:634px;top:366px;font-size:16px;color:#222;transform:scaleX(0.99);" id="cp1">Color Picker</div>
<div class="t" style="left:605px;top:404.500px;font-size:16px;color:#222;transform:scaleX(0.99);" id="cp2">Active Color:</div>
<div class="abs" style="left:712px;top:393px;width:32px;height:32px;background:#f5e226;"></div>
<div class="abs" style="left:590px;top:429px;width:175px;height:154px;border:1px solid #c6c6c6;box-sizing:border-box;background:#fff;"></div>
<div class="abs" style="left:592px;top:431px;width:150px;height:150px;background:linear-gradient(180deg,rgba(0,0,0,0),#000),linear-gradient(90deg,#fff,hsl(175,100%,50%));"></div>
<div class="abs" style="left:743px;top:431px;width:20px;height:150px;background:linear-gradient(180deg,#ff0000 0%,#ff00ff 16.600%,#0000ff 33.300%,#00ffff 50%,#00ff00 66.600%,#ffff00 83.300%,#ff0000 100%);"></div>
<div class="abs" style="left:707.500px;top:432.500px;width:13px;height:13px;border-radius:50%;border:2px solid #fff;box-shadow:0 0 0 1px #111;box-sizing:border-box;"></div>
<div class="abs" style="left:743px;top:506px;width:20px;height:4px;background:#fff;border:1px solid #222;box-sizing:border-box;"></div>
<div class="abs cpb" style="left:588px;top:592px;width:59px;height:21px;" id="b1">Ok</div>
<div class="abs cpb" style="left:650px;top:592px;width:60px;height:21px;" id="b2">Cancel</div>
<div class="abs cpb" style="left:712px;top:592px;width:60px;height:21px;" id="b3">Apply</div>
<!--/COLOR-PICKER-->

</body>
</html>
